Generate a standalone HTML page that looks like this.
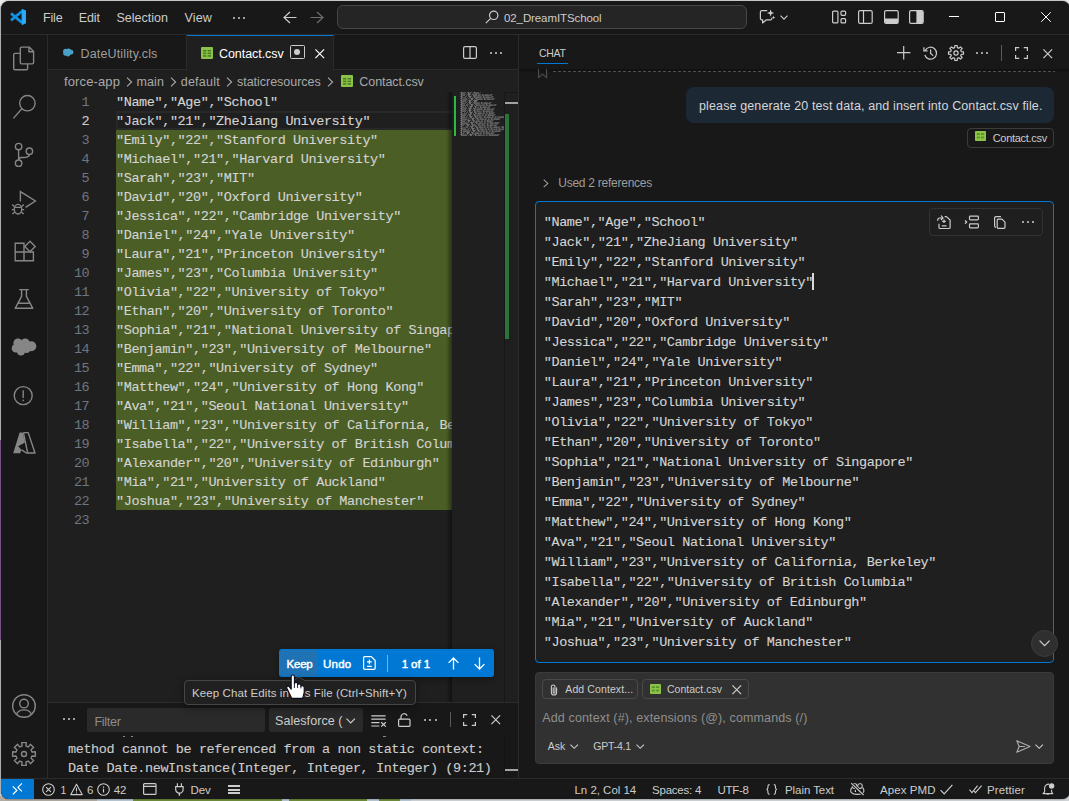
<!DOCTYPE html>
<html><head><meta charset="utf-8"><title>VS Code</title><style>
html,body{margin:0;padding:0;}
body{width:1069px;height:801px;overflow:hidden;background:#ebebeb;position:relative;font-family:"Liberation Sans",sans-serif;}
#win{position:absolute;left:1px;top:1px;width:1068.5px;height:797.5px;border-radius:8px;background:#181818;overflow:hidden;box-shadow:0 0 1.5px rgba(0,0,0,.8);}
#in{position:absolute;left:-1px;top:-1px;width:1069px;height:801px;}
#in div,#in svg,#in span{position:absolute;box-sizing:border-box;}
#in svg{overflow:visible;}
.t{font-family:"Liberation Sans",sans-serif;white-space:pre;}
.m{font-family:"Liberation Mono",monospace;white-space:pre;-webkit-text-stroke:0.12px currentColor;}
</style></head><body>
<div style="position:absolute;left:0px;top:796px;width:97px;height:5px;background:#b0aca3"></div><div style="position:absolute;left:97px;top:796px;width:36px;height:5px;background:#b9c7d3"></div><div style="position:absolute;left:133px;top:796px;width:149px;height:5px;background:#6f8c3c"></div><div style="position:absolute;left:282px;top:796px;width:7px;height:5px;background:#b9c7d3"></div><div style="position:absolute;left:289px;top:796px;width:78px;height:5px;background:#6f8c3c"></div><div style="position:absolute;left:367px;top:796px;width:12px;height:5px;background:#b9c7d3"></div><div style="position:absolute;left:379px;top:796px;width:21px;height:5px;background:#6f8c3c"></div><div style="position:absolute;left:400px;top:796px;width:11px;height:5px;background:#b9c7d3"></div><div style="position:absolute;left:411px;top:796px;width:658px;height:5px;background:#cfd3d6"></div><div style="position:absolute;left:0;top:6px;width:3px;height:790px;background:#c9cfd5"></div><div style="position:absolute;left:0;top:440px;width:3px;height:200px;background:#8d5f9f"></div>
<div id="win"><div id="in">
<div style="left:48px;top:35px;width:470px;height:668px;background:#1f1f1f;"></div>
<div style="left:0px;top:34px;width:1069px;height:1px;background:#2b2b2b;"></div>
<div style="left:47px;top:35px;width:1px;height:743px;background:#2b2b2b;"></div>
<div style="left:48px;top:35px;width:470px;height:35px;background:#181818;"></div>
<div style="left:48px;top:69px;width:470px;height:1px;background:#2b2b2b;"></div>
<div style="left:186px;top:35px;width:1px;height:35px;background:#2b2b2b;"></div>
<div style="left:187px;top:35px;width:146px;height:35px;background:#1f1f1f;"></div>
<div style="left:187px;top:35px;width:146px;height:1px;background:#0078d4;"></div>
<div style="left:333px;top:35px;width:1px;height:35px;background:#2b2b2b;"></div>
<div style="left:518px;top:35px;width:1px;height:743px;background:#2b2b2b;"></div>
<div style="left:0px;top:778px;width:1069px;height:1px;background:#2b2b2b;"></div>
<div style="left:0px;top:779px;width:34px;height:20px;background:#0078d4;"></div>
<div style="left:48px;top:702px;width:470px;height:76px;background:#181818;"></div>
<div style="left:48px;top:702px;width:470px;height:1px;background:#2b2b2b;"></div>
<svg style="left:10px;top:9px;" width="16" height="16" viewBox="0 0 16 16">
<path d="M12 2.2 L1 11.4 M12 13.6 L1 4.4" stroke="#1191e0" stroke-width="2.7" stroke-linecap="butt" fill="none"/>
<path d="M11.6 0.3 L12.4 -0.1 L16 1.6 V14.2 L12.4 15.9 L11.6 15.5 Z" fill="#2aa9f4"/>
</svg>
<span class="t" style="left:43px;top:8.3px;line-height:20px;font-size:12.5px;color:#cccccc;letter-spacing:-0.162px;">File</span>
<span class="t" style="left:78.7px;top:8.3px;line-height:20px;font-size:12.5px;color:#cccccc;letter-spacing:-0.061px;">Edit</span>
<span class="t" style="left:116.5px;top:8.3px;line-height:20px;font-size:12.5px;color:#cccccc;letter-spacing:0.008px;">Selection</span>
<span class="t" style="left:184.5px;top:8.3px;line-height:20px;font-size:12.5px;color:#cccccc;letter-spacing:0.155px;">View</span>
<div style="left:233.0px;top:16.5px;width:2px;height:2px;background:#cccccc;border-radius:1px;"></div>
<div style="left:238.2px;top:16.5px;width:2px;height:2px;background:#cccccc;border-radius:1px;"></div>
<div style="left:243.4px;top:16.5px;width:2px;height:2px;background:#cccccc;border-radius:1px;"></div>
<svg style="left:283px;top:11px;" width="14" height="13" viewBox="0 0 14 13"><path d="M7 1 L1 6.5 L7 12 M1 6.5 H13.5" fill="none" stroke="#cccccc" stroke-width="1.2"/></svg>
<svg style="left:310px;top:11px;" width="14" height="13" viewBox="0 0 14 13"><path d="M7 1 L13 6.5 L7 12 M13 6.5 H0.5" fill="none" stroke="#6f6f6f" stroke-width="1.2"/></svg>
<div style="left:337px;top:5px;width:409.5px;height:24px;background:#252525;border:1px solid #464646;border-radius:6px;"></div>
<svg style="left:485px;top:10px;" width="14" height="14" viewBox="0 0 14 14"><circle cx="8.7" cy="5.3" r="4.2" fill="none" stroke="#cccccc" stroke-width="1.2"/><path d="M5.7 8.3 L0.8 13.2" stroke="#cccccc" stroke-width="1.2"/></svg>
<span class="t" style="left:504px;top:8.3px;line-height:20px;font-size:11.5px;color:#cccccc;letter-spacing:-0.099px;">02_DreamITSchool</span>
<svg style="left:759px;top:9px;" width="17" height="16" viewBox="0 0 17 16"><path d="M8.2 1.7 H2.6 A1.2 1.2 0 0 0 1.4 2.9 V9.6 A1.2 1.2 0 0 0 2.6 10.8 H3.6 V14 L7.4 10.8 H11.6 A1.2 1.2 0 0 0 12.8 9.6 V8.8" fill="none" stroke="#cccccc" stroke-width="1.2" stroke-linejoin="round"/>
<path d="M11.6 0.3 L12.5 3.1 L15.3 4 L12.5 4.9 L11.6 7.7 L10.7 4.9 L7.9 4 L10.7 3.1 Z" fill="#cccccc"/><path d="M14.6 6.6 l0.5 1.3 1.3 0.5 -1.3 0.5 -0.5 1.3 -0.5 -1.3 -1.3 -0.5 1.3 -0.5z" fill="#cccccc"/></svg>
<svg style="left:779.5px;top:14.5px;" width="8" height="5" viewBox="0 0 8 5"><path d="M0.5 0.6 L4 4.1 L7.5 0.6" fill="none" stroke="#cccccc" stroke-width="1.1"/></svg>
<svg style="left:832px;top:10px;" width="15" height="14" viewBox="0 0 15 14"><rect x="0.6" y="1.1" width="5.3" height="11.8" rx="1" fill="none" stroke="#cccccc" stroke-width="1.2"/>
<rect x="9" y="1.1" width="4.6" height="4.2" rx="1" fill="none" stroke="#cccccc" stroke-width="1.2"/>
<rect x="9" y="8.7" width="4.6" height="4.2" rx="1" fill="none" stroke="#cccccc" stroke-width="1.2"/></svg>
<svg style="left:857.5px;top:10px;" width="15" height="14" viewBox="0 0 15 14"><rect x="0.6" y="0.6" width="13.6" height="12.8" rx="1.5" fill="none" stroke="#cccccc" stroke-width="1.2"/><path d="M5.5 0.6 V13.4" stroke="#cccccc" stroke-width="1.2"/></svg>
<svg style="left:883.5px;top:10px;" width="15" height="14" viewBox="0 0 15 14"><rect x="0.6" y="0.6" width="13.6" height="12.8" rx="1.5" fill="none" stroke="#cccccc" stroke-width="1.2"/><path d="M1 8.5 H14 V12 A1.4 1.4 0 0 1 12.6 13.4 H2.4 A1.4 1.4 0 0 1 1 12 Z" fill="#cccccc"/></svg>
<svg style="left:909px;top:10px;" width="15" height="14" viewBox="0 0 15 14"><rect x="0.6" y="0.6" width="13.6" height="12.8" rx="1.5" fill="none" stroke="#cccccc" stroke-width="1.2"/><path d="M7.4 1 H12.6 A1.4 1.4 0 0 1 14 2.4 V11.6 A1.4 1.4 0 0 1 12.6 13 H7.4 Z" fill="#cccccc"/></svg>
<div style="left:948.5px;top:16px;width:10.5px;height:1px;background:#ffffff;"></div>
<div style="left:995px;top:12px;width:10px;height:10px;border:1px solid #ffffff;border-radius:1px;"></div>
<svg style="left:1041px;top:12px;" width="10" height="10" viewBox="0 0 10 10"><path d="M0.2 0.2 L9.8 9.8 M9.8 0.2 L0.2 9.8" stroke="#ffffff" stroke-width="1"/></svg>
<svg style="left:0px;top:35px;" width="48" height="48" viewBox="0 0 48 48">
<path d="M20.3 25.2 V13.4 A1.3 1.3 0 0 1 21.6 12.1 H29.2 L33.6 16.5 V27.6 A1.3 1.3 0 0 1 32.3 28.9 H21.6 A1.3 1.3 0 0 1 20.3 27.6 Z" fill="none" stroke="#868686" stroke-width="1.4" stroke-linejoin="round"/>
<path d="M29 12.3 V16.7 H33.4" fill="none" stroke="#868686" stroke-width="1.4"/>
<path d="M20.3 18.4 H15 A1.3 1.3 0 0 0 13.7 19.7 V33.5 A1.3 1.3 0 0 0 15 34.8 H26.3 A1.3 1.3 0 0 0 27.6 33.5 V29" fill="none" stroke="#868686" stroke-width="1.4"/>
</svg>
<svg style="left:0px;top:83px;" width="48" height="48" viewBox="0 0 48 48"><circle cx="27.4" cy="20.2" r="7.7" fill="none" stroke="#868686" stroke-width="1.4"/><path d="M21.8 25.8 L13.4 35.4" fill="none" stroke="#868686" stroke-width="1.4"/></svg>
<svg style="left:0px;top:131px;" width="48" height="48" viewBox="0 0 48 48"><circle cx="18.6" cy="15.6" r="3.2" fill="none" stroke="#868686" stroke-width="1.4"/><circle cx="18.6" cy="32.2" r="3.2" fill="none" stroke="#868686" stroke-width="1.4"/><circle cx="29.4" cy="20.2" r="3.2" fill="none" stroke="#868686" stroke-width="1.4"/>
<path d="M18.6 18.8 V29 M29.4 23.4 C29.4 27 25 26.4 21.5 26.5 C19.5 26.6 18.6 27.5 18.6 29" fill="none" stroke="#868686" stroke-width="1.4"/></svg>
<svg style="left:0px;top:179px;" width="48" height="48" viewBox="0 0 48 48"><path d="M20.4 22.5 V12.6 L35.4 22 L25.6 28.4" fill="none" stroke="#868686" stroke-width="1.4"/>
<ellipse cx="18" cy="30.2" rx="3.7" ry="4.8" fill="none" stroke="#868686" stroke-width="1.4"/>
<path d="M14.4 28.4 H21.6 M14.3 27.5 L12.2 25.6 M21.7 27.5 L23.8 25.6 M14.2 30.6 H11.8 M21.8 30.6 H24.2 M14.6 33 L12.4 35 M21.4 33 L23.6 35" fill="none" stroke="#868686" stroke-width="1.4" stroke-width="1.2"/></svg>
<svg style="left:0px;top:227px;" width="48" height="48" viewBox="0 0 48 48"><path d="M24 16.3 H15.2 V33.7 H33.4 V25 H24 Z M15.2 25 H24 V33.7" fill="none" stroke="#868686" stroke-width="1.4"/>
<path d="M30 14.3 L35.2 19.5 L30 24.7 L24.8 19.5 Z" fill="none" stroke="#868686" stroke-width="1.4"/></svg>
<svg style="left:0px;top:275px;" width="48" height="48" viewBox="0 0 48 48"><path d="M19.2 14.6 H28.8 M21.6 14.6 V21.4 L15.2 33.3 H32.8 L26.4 21.4 V14.6 M17.8 28.2 H30.2" fill="none" stroke="#868686" stroke-width="1.4" stroke-linejoin="round"/></svg>
<svg style="left:0px;top:323px;" width="48" height="48" viewBox="0 0 48 48"><g fill="#868686"><circle cx="18" cy="20" r="4.6"/><circle cx="25.2" cy="20.4" r="4.8"/><circle cx="31.3" cy="23.2" r="5"/><circle cx="16" cy="25.2" r="4.3"/><circle cx="21" cy="28.2" r="4.2"/><circle cx="26.5" cy="25.8" r="4.3"/><rect x="16" y="20" width="14" height="8"/></g></svg>
<svg style="left:0px;top:371px;" width="48" height="48" viewBox="0 0 48 48"><circle cx="23.2" cy="24.6" r="9" fill="none" stroke="#868686" stroke-width="1.4" stroke-width="1.2"/><path d="M23.2 19.2 V27" fill="none" stroke="#868686" stroke-width="1.4" stroke-width="1.3"/><rect x="22.5" y="28.6" width="1.4" height="1.6" fill="#868686"/></svg>
<svg style="left:0px;top:419px;" width="48" height="48" viewBox="0 0 48 48"><path d="M19.6 13.4 H22.6 L25 23.4 L18.2 27.2 L21.4 30.8 L20.2 34.2 H13.2 Z" fill="#868686"/>
<path d="M23.4 13.6 H28.2 L35 34 H26.4 L21.6 30.8" fill="none" stroke="#868686" stroke-width="1.4" stroke-width="1.3" stroke-linejoin="round"/><path d="M23.4 13.6 L27.6 33.6" fill="none" stroke="#868686" stroke-width="1.4" stroke-width="1.3"/></svg>
<svg style="left:0px;top:682px;" width="48" height="48" viewBox="0 0 48 48"><circle cx="24" cy="24" r="11.3" fill="none" stroke="#868686" stroke-width="1.4"/><circle cx="24" cy="21.6" r="4.3" fill="none" stroke="#868686" stroke-width="1.4"/><path d="M16.6 32.4 C17.6 29.4 20.4 27.9 24 27.9 C27.6 27.9 30.4 29.4 31.4 32.4" fill="none" stroke="#868686" stroke-width="1.4"/></svg>
<svg style="left:0px;top:730px;" width="48" height="48" viewBox="0 0 48 48"><path d="M22.02 16.04 L21.74 12.62 L26.26 12.62 L25.98 16.04 L28.23 16.97 L30.44 14.35 L33.65 17.56 L31.03 19.77 L31.96 22.02 L35.38 21.74 L35.38 26.26 L31.96 25.98 L31.03 28.23 L33.65 30.44 L30.44 33.65 L28.23 31.03 L25.98 31.96 L26.26 35.38 L21.74 35.38 L22.02 31.96 L19.77 31.03 L17.56 33.65 L14.35 30.44 L16.97 28.23 L16.04 25.98 L12.62 26.26 L12.62 21.74 L16.04 22.02 L16.97 19.77 L14.35 17.56 L17.56 14.35 L19.77 16.97 Z" fill="none" stroke="#868686" stroke-width="1.4" stroke-linejoin="round"/><circle cx="24" cy="24" r="2.5" fill="none" stroke="#868686" stroke-width="1.4"/></svg>
<svg style="left:62px;top:47px;" width="12" height="11" viewBox="0 0 12 11"><g fill="#4ba0c8"><circle cx="3.6" cy="4.2" r="2.5"/><circle cx="6.6" cy="4" r="2.6"/><circle cx="9" cy="5.2" r="2.4"/><circle cx="3.4" cy="6.6" r="2.2"/><circle cx="6" cy="7.2" r="2.2"/><rect x="3" y="3.5" width="6" height="4"/></g></svg>
<span class="t" style="left:80.5px;top:43.8px;line-height:20px;font-size:12.5px;color:#9d9d9d;letter-spacing:0.147px;">DateUtility.cls</span>
<svg style="left:201px;top:46.5px;" width="12" height="12" viewBox="0 0 12 12"><rect x="0" y="0" width="12" height="12" rx="1" fill="#8bc34a"/><g fill="#4d7a1e"><rect x="2" y="3" width="3.4" height="1.5"/><rect x="6.6" y="3" width="3.4" height="1.5"/><rect x="2" y="5.6" width="3.4" height="1.5"/><rect x="6.6" y="5.6" width="3.4" height="1.5"/><rect x="2" y="8.2" width="3.4" height="1.5"/><rect x="6.6" y="8.2" width="3.4" height="1.5"/></g></svg>
<span class="t" style="left:219px;top:43.8px;line-height:20px;font-size:12.5px;color:#ffffff;letter-spacing:-0.055px;">Contact.csv</span>
<div style="left:289.6px;top:45px;width:15px;height:14px;border:1.4px solid #cccccc;border-radius:1.5px;"></div>
<div style="left:293.7px;top:48.8px;width:6.6px;height:6.6px;background:#cccccc;border-radius:3.3px;"></div>
<svg style="left:314.5px;top:48.5px;" width="9.5" height="9.5" viewBox="0 0 9.5 9.5"><path d="M0.4 0.4 L9.1 9.1 M9.1 0.4 L0.4 9.1" stroke="#ffffff" stroke-width="1.2"/></svg>
<svg style="left:463px;top:46px;" width="14" height="13" viewBox="0 0 14 13"><rect x="0.6" y="0.6" width="12.8" height="11.8" rx="1.5" fill="none" stroke="#cccccc" stroke-width="1.2"/><path d="M7 0.6 V12.4" stroke="#cccccc" stroke-width="1.2"/></svg>
<div style="left:490px;top:52px;width:2px;height:2px;background:#cccccc;border-radius:1px;"></div>
<div style="left:495px;top:52px;width:2px;height:2px;background:#cccccc;border-radius:1px;"></div>
<div style="left:500px;top:52px;width:2px;height:2px;background:#cccccc;border-radius:1px;"></div>
<span class="t" style="left:64px;top:71.8px;line-height:20px;font-size:13px;color:#a9a9a9;letter-spacing:0.120px;">force-app</span>
<span class="t" style="left:136.5px;top:71.8px;line-height:20px;font-size:12.5px;color:#a9a9a9;letter-spacing:0.099px;">main</span>
<span class="t" style="left:180.7px;top:71.8px;line-height:20px;font-size:12.5px;color:#a9a9a9;letter-spacing:0.251px;">default</span>
<span class="t" style="left:237px;top:71.8px;line-height:20px;font-size:12.5px;color:#a9a9a9;letter-spacing:-0.024px;">staticresources</span>
<svg style="left:125.5px;top:76.5px;" width="7" height="10" viewBox="0 0 7 10"><path d="M1 0.7 L5.6 5 L1 9.3" fill="none" stroke="#a9a9a9" stroke-width="1.1"/></svg>
<svg style="left:170px;top:76.5px;" width="7" height="10" viewBox="0 0 7 10"><path d="M1 0.7 L5.6 5 L1 9.3" fill="none" stroke="#a9a9a9" stroke-width="1.1"/></svg>
<svg style="left:226px;top:76.5px;" width="7" height="10" viewBox="0 0 7 10"><path d="M1 0.7 L5.6 5 L1 9.3" fill="none" stroke="#a9a9a9" stroke-width="1.1"/></svg>
<svg style="left:326.5px;top:76.5px;" width="7" height="10" viewBox="0 0 7 10"><path d="M1 0.7 L5.6 5 L1 9.3" fill="none" stroke="#a9a9a9" stroke-width="1.1"/></svg>
<svg style="left:340.8px;top:75px;" width="12" height="12" viewBox="0 0 12 12"><rect x="0" y="0" width="12" height="12" rx="1" fill="#8bc34a"/><g fill="#4d7a1e"><rect x="2" y="3" width="3.4" height="1.5"/><rect x="6.6" y="3" width="3.4" height="1.5"/><rect x="2" y="5.6" width="3.4" height="1.5"/><rect x="6.6" y="5.6" width="3.4" height="1.5"/><rect x="2" y="8.2" width="3.4" height="1.5"/><rect x="6.6" y="8.2" width="3.4" height="1.5"/></g></svg>
<span class="t" style="left:359.3px;top:71.8px;line-height:20px;font-size:12.5px;color:#a9a9a9;letter-spacing:-0.074px;">Contact.csv</span>
<div style="left:116px;top:130px;width:336px;height:380px;background:#4b5e25;"></div>
<div style="left:116px;top:111px;width:336px;height:19px;border:2px solid #282828;border-right:none;"></div>
<span class="m" style="left:81.6px;top:92.8px;line-height:19px;font-size:13.5px;color:#6e7681;letter-spacing:-0.409px;-webkit-text-stroke:0;">1</span>
<span class="m" style="left:116px;top:92.8px;line-height:19px;font-size:13.5px;color:#d4d4d4;letter-spacing:-0.402px;">&quot;Name&quot;,&quot;Age&quot;,&quot;School&quot;</span>
<span class="m" style="left:81.6px;top:111.8px;line-height:19px;font-size:13.5px;color:#cccccc;letter-spacing:-0.409px;">2</span>
<span class="m" style="left:116px;top:111.8px;line-height:19px;font-size:13.5px;color:#d4d4d4;letter-spacing:-0.401px;">&quot;Jack&quot;,&quot;21&quot;,&quot;ZheJiang University&quot;</span>
<span class="m" style="left:81.6px;top:130.8px;line-height:19px;font-size:13.5px;color:#6e7681;letter-spacing:-0.409px;-webkit-text-stroke:0;">3</span>
<span class="m" style="left:116px;top:130.8px;line-height:19px;font-size:13.5px;color:#d4d4d4;letter-spacing:-0.402px;">&quot;Emily&quot;,&quot;22&quot;,&quot;Stanford University&quot;</span>
<span class="m" style="left:81.6px;top:149.8px;line-height:19px;font-size:13.5px;color:#6e7681;letter-spacing:-0.409px;-webkit-text-stroke:0;">4</span>
<span class="m" style="left:116px;top:149.8px;line-height:19px;font-size:13.5px;color:#d4d4d4;letter-spacing:-0.401px;">&quot;Michael&quot;,&quot;21&quot;,&quot;Harvard University&quot;</span>
<span class="m" style="left:81.6px;top:168.8px;line-height:19px;font-size:13.5px;color:#6e7681;letter-spacing:-0.409px;-webkit-text-stroke:0;">5</span>
<span class="m" style="left:116px;top:168.8px;line-height:19px;font-size:13.5px;color:#d4d4d4;letter-spacing:-0.402px;">&quot;Sarah&quot;,&quot;23&quot;,&quot;MIT&quot;</span>
<span class="m" style="left:81.6px;top:187.8px;line-height:19px;font-size:13.5px;color:#6e7681;letter-spacing:-0.409px;-webkit-text-stroke:0;">6</span>
<span class="m" style="left:116px;top:187.8px;line-height:19px;font-size:13.5px;color:#d4d4d4;letter-spacing:-0.402px;">&quot;David&quot;,&quot;20&quot;,&quot;Oxford University&quot;</span>
<span class="m" style="left:81.6px;top:206.8px;line-height:19px;font-size:13.5px;color:#6e7681;letter-spacing:-0.409px;-webkit-text-stroke:0;">7</span>
<span class="m" style="left:116px;top:206.8px;line-height:19px;font-size:13.5px;color:#d4d4d4;letter-spacing:-0.401px;">&quot;Jessica&quot;,&quot;22&quot;,&quot;Cambridge University&quot;</span>
<span class="m" style="left:81.6px;top:225.8px;line-height:19px;font-size:13.5px;color:#6e7681;letter-spacing:-0.409px;-webkit-text-stroke:0;">8</span>
<span class="m" style="left:116px;top:225.8px;line-height:19px;font-size:13.5px;color:#d4d4d4;letter-spacing:-0.402px;">&quot;Daniel&quot;,&quot;24&quot;,&quot;Yale University&quot;</span>
<span class="m" style="left:81.6px;top:244.8px;line-height:19px;font-size:13.5px;color:#6e7681;letter-spacing:-0.409px;-webkit-text-stroke:0;">9</span>
<span class="m" style="left:116px;top:244.8px;line-height:19px;font-size:13.5px;color:#d4d4d4;letter-spacing:-0.401px;">&quot;Laura&quot;,&quot;21&quot;,&quot;Princeton University&quot;</span>
<span class="m" style="left:73.89999999999999px;top:263.8px;line-height:19px;font-size:13.5px;color:#6e7681;letter-spacing:-0.402px;-webkit-text-stroke:0;">10</span>
<span class="m" style="left:116px;top:263.8px;line-height:19px;font-size:13.5px;color:#d4d4d4;letter-spacing:-0.402px;">&quot;James&quot;,&quot;23&quot;,&quot;Columbia University&quot;</span>
<span class="m" style="left:73.89999999999999px;top:282.8px;line-height:19px;font-size:13.5px;color:#6e7681;letter-spacing:-0.402px;-webkit-text-stroke:0;">11</span>
<span class="m" style="left:116px;top:282.8px;line-height:19px;font-size:13.5px;color:#d4d4d4;letter-spacing:-0.401px;">&quot;Olivia&quot;,&quot;22&quot;,&quot;University of Tokyo&quot;</span>
<span class="m" style="left:73.89999999999999px;top:301.8px;line-height:19px;font-size:13.5px;color:#6e7681;letter-spacing:-0.402px;-webkit-text-stroke:0;">12</span>
<span class="m" style="left:116px;top:301.8px;line-height:19px;font-size:13.5px;color:#d4d4d4;letter-spacing:-0.402px;">&quot;Ethan&quot;,&quot;20&quot;,&quot;University of Toronto&quot;</span>
<span class="m" style="left:73.89999999999999px;top:320.8px;line-height:19px;font-size:13.5px;color:#6e7681;letter-spacing:-0.402px;-webkit-text-stroke:0;">13</span>
<span class="m" style="left:116px;top:320.8px;line-height:19px;font-size:13.5px;color:#d4d4d4;letter-spacing:-0.402px;">&quot;Sophia&quot;,&quot;21&quot;,&quot;National University of Singapore&quot;</span>
<span class="m" style="left:73.89999999999999px;top:339.8px;line-height:19px;font-size:13.5px;color:#6e7681;letter-spacing:-0.402px;-webkit-text-stroke:0;">14</span>
<span class="m" style="left:116px;top:339.8px;line-height:19px;font-size:13.5px;color:#d4d4d4;letter-spacing:-0.401px;">&quot;Benjamin&quot;,&quot;23&quot;,&quot;University of Melbourne&quot;</span>
<span class="m" style="left:73.89999999999999px;top:358.8px;line-height:19px;font-size:13.5px;color:#6e7681;letter-spacing:-0.402px;-webkit-text-stroke:0;">15</span>
<span class="m" style="left:116px;top:358.8px;line-height:19px;font-size:13.5px;color:#d4d4d4;letter-spacing:-0.402px;">&quot;Emma&quot;,&quot;22&quot;,&quot;University of Sydney&quot;</span>
<span class="m" style="left:73.89999999999999px;top:377.8px;line-height:19px;font-size:13.5px;color:#6e7681;letter-spacing:-0.402px;-webkit-text-stroke:0;">16</span>
<span class="m" style="left:116px;top:377.8px;line-height:19px;font-size:13.5px;color:#d4d4d4;letter-spacing:-0.402px;">&quot;Matthew&quot;,&quot;24&quot;,&quot;University of Hong Kong&quot;</span>
<span class="m" style="left:73.89999999999999px;top:396.8px;line-height:19px;font-size:13.5px;color:#6e7681;letter-spacing:-0.402px;-webkit-text-stroke:0;">17</span>
<span class="m" style="left:116px;top:396.8px;line-height:19px;font-size:13.5px;color:#d4d4d4;letter-spacing:-0.402px;">&quot;Ava&quot;,&quot;21&quot;,&quot;Seoul National University&quot;</span>
<span class="m" style="left:73.89999999999999px;top:415.8px;line-height:19px;font-size:13.5px;color:#6e7681;letter-spacing:-0.402px;-webkit-text-stroke:0;">18</span>
<span class="m" style="left:116px;top:415.8px;line-height:19px;font-size:13.5px;color:#d4d4d4;letter-spacing:-0.401px;">&quot;William&quot;,&quot;23&quot;,&quot;University of California, Berkeley&quot;</span>
<span class="m" style="left:73.89999999999999px;top:434.8px;line-height:19px;font-size:13.5px;color:#6e7681;letter-spacing:-0.402px;-webkit-text-stroke:0;">19</span>
<span class="m" style="left:116px;top:434.8px;line-height:19px;font-size:13.5px;color:#d4d4d4;letter-spacing:-0.402px;">&quot;Isabella&quot;,&quot;22&quot;,&quot;University of British Columbia&quot;</span>
<span class="m" style="left:73.89999999999999px;top:453.8px;line-height:19px;font-size:13.5px;color:#6e7681;letter-spacing:-0.402px;-webkit-text-stroke:0;">20</span>
<span class="m" style="left:116px;top:453.8px;line-height:19px;font-size:13.5px;color:#d4d4d4;letter-spacing:-0.402px;">&quot;Alexander&quot;,&quot;20&quot;,&quot;University of Edinburgh&quot;</span>
<span class="m" style="left:73.89999999999999px;top:472.8px;line-height:19px;font-size:13.5px;color:#6e7681;letter-spacing:-0.402px;-webkit-text-stroke:0;">21</span>
<span class="m" style="left:116px;top:472.8px;line-height:19px;font-size:13.5px;color:#d4d4d4;letter-spacing:-0.401px;">&quot;Mia&quot;,&quot;21&quot;,&quot;University of Auckland&quot;</span>
<span class="m" style="left:73.89999999999999px;top:491.8px;line-height:19px;font-size:13.5px;color:#6e7681;letter-spacing:-0.402px;-webkit-text-stroke:0;">22</span>
<span class="m" style="left:116px;top:491.8px;line-height:19px;font-size:13.5px;color:#d4d4d4;letter-spacing:-0.402px;">&quot;Joshua&quot;,&quot;23&quot;,&quot;University of Manchester&quot;</span>
<span class="m" style="left:73.89999999999999px;top:510.8px;line-height:19px;font-size:13.5px;color:#6e7681;letter-spacing:-0.402px;-webkit-text-stroke:0;">23</span>
<div style="left:446px;top:92px;width:6px;height:610px;background:linear-gradient(to right, rgba(0,0,0,0), rgba(0,0,0,.45));"></div>
<div style="left:452px;top:92px;width:66px;height:610px;background:#1f1f1f;"></div>
<div style="left:454px;top:96px;width:2px;height:40px;background:#2db843;"></div>
<svg style="left:0;top:0" width="520" height="140"><g fill="#dddddd"><rect x="460.0" y="92.0" width="1.0" height="0.9" opacity="0.3"/><rect x="461.0" y="92.1" width="1.0" height="1.7" opacity="0.5"/><rect x="462.0" y="92.4" width="3.0" height="1.4" opacity="0.42"/><rect x="464.9" y="92.0" width="1.0" height="0.9" opacity="0.3"/><rect x="465.9" y="92.9" width="1.0" height="0.9" opacity="0.28"/><rect x="466.9" y="92.0" width="1.0" height="0.9" opacity="0.3"/><rect x="467.9" y="92.1" width="1.0" height="1.7" opacity="0.5"/><rect x="468.9" y="92.4" width="2.0" height="1.4" opacity="0.42"/><rect x="470.9" y="92.0" width="1.0" height="0.9" opacity="0.3"/><rect x="471.9" y="92.9" width="1.0" height="0.9" opacity="0.28"/><rect x="472.9" y="92.0" width="1.0" height="0.9" opacity="0.3"/><rect x="473.9" y="92.1" width="1.0" height="1.7" opacity="0.5"/><rect x="474.9" y="92.4" width="4.0" height="1.4" opacity="0.42"/><rect x="478.8" y="92.9" width="1.0" height="0.9" opacity="0.28"/><rect x="479.8" y="92.0" width="1.0" height="0.9" opacity="0.3"/><rect x="460.0" y="94.0" width="1.0" height="0.9" opacity="0.3"/><rect x="461.0" y="94.1" width="1.0" height="1.7" opacity="0.5"/><rect x="462.0" y="94.4" width="3.0" height="1.4" opacity="0.42"/><rect x="464.9" y="94.0" width="1.0" height="0.9" opacity="0.3"/><rect x="465.9" y="94.9" width="1.0" height="0.9" opacity="0.28"/><rect x="466.9" y="94.0" width="1.0" height="0.9" opacity="0.3"/><rect x="467.9" y="94.1" width="2.0" height="1.7" opacity="0.5"/><rect x="469.9" y="94.0" width="1.0" height="0.9" opacity="0.3"/><rect x="470.9" y="94.9" width="1.0" height="0.9" opacity="0.28"/><rect x="471.9" y="94.0" width="1.0" height="0.9" opacity="0.3"/><rect x="472.9" y="94.1" width="1.0" height="1.7" opacity="0.5"/><rect x="473.9" y="94.4" width="2.0" height="1.4" opacity="0.42"/><rect x="475.8" y="94.1" width="1.0" height="1.7" opacity="0.5"/><rect x="476.8" y="94.9" width="1.0" height="0.9" opacity="0.28"/><rect x="477.8" y="94.4" width="3.0" height="1.4" opacity="0.42"/><rect x="481.8" y="94.1" width="1.0" height="1.7" opacity="0.5"/><rect x="482.8" y="94.4" width="1.0" height="1.4" opacity="0.42"/><rect x="483.8" y="94.9" width="1.0" height="0.9" opacity="0.28"/><rect x="484.8" y="94.4" width="4.0" height="1.4" opacity="0.42"/><rect x="488.7" y="94.9" width="1.0" height="0.9" opacity="0.28"/><rect x="489.7" y="94.4" width="2.0" height="1.4" opacity="0.42"/><rect x="491.7" y="94.0" width="1.0" height="0.9" opacity="0.3"/><rect x="460.0" y="96.0" width="1.0" height="0.9" opacity="0.3"/><rect x="461.0" y="96.1" width="1.0" height="1.7" opacity="0.5"/><rect x="462.0" y="96.4" width="1.0" height="1.4" opacity="0.42"/><rect x="463.0" y="96.9" width="2.0" height="0.9" opacity="0.28"/><rect x="464.9" y="96.4" width="1.0" height="1.4" opacity="0.42"/><rect x="465.9" y="96.0" width="1.0" height="0.9" opacity="0.3"/><rect x="466.9" y="96.9" width="1.0" height="0.9" opacity="0.28"/><rect x="467.9" y="96.0" width="1.0" height="0.9" opacity="0.3"/><rect x="468.9" y="96.1" width="2.0" height="1.7" opacity="0.5"/><rect x="470.9" y="96.0" width="1.0" height="0.9" opacity="0.3"/><rect x="471.9" y="96.9" width="1.0" height="0.9" opacity="0.28"/><rect x="472.9" y="96.0" width="1.0" height="0.9" opacity="0.3"/><rect x="473.9" y="96.1" width="1.0" height="1.7" opacity="0.5"/><rect x="474.9" y="96.4" width="6.9" height="1.4" opacity="0.42"/><rect x="482.8" y="96.1" width="1.0" height="1.7" opacity="0.5"/><rect x="483.8" y="96.4" width="1.0" height="1.4" opacity="0.42"/><rect x="484.8" y="96.9" width="1.0" height="0.9" opacity="0.28"/><rect x="485.7" y="96.4" width="4.0" height="1.4" opacity="0.42"/><rect x="489.7" y="96.9" width="1.0" height="0.9" opacity="0.28"/><rect x="490.7" y="96.4" width="2.0" height="1.4" opacity="0.42"/><rect x="492.7" y="96.0" width="1.0" height="0.9" opacity="0.3"/><rect x="460.0" y="98.0" width="1.0" height="0.9" opacity="0.3"/><rect x="461.0" y="98.1" width="1.0" height="1.7" opacity="0.5"/><rect x="462.0" y="98.9" width="1.0" height="0.9" opacity="0.28"/><rect x="463.0" y="98.4" width="4.0" height="1.4" opacity="0.42"/><rect x="466.9" y="98.9" width="1.0" height="0.9" opacity="0.28"/><rect x="467.9" y="98.0" width="1.0" height="0.9" opacity="0.3"/><rect x="468.9" y="98.9" width="1.0" height="0.9" opacity="0.28"/><rect x="469.9" y="98.0" width="1.0" height="0.9" opacity="0.3"/><rect x="470.9" y="98.1" width="2.0" height="1.7" opacity="0.5"/><rect x="472.9" y="98.0" width="1.0" height="0.9" opacity="0.3"/><rect x="473.9" y="98.9" width="1.0" height="0.9" opacity="0.28"/><rect x="474.9" y="98.0" width="1.0" height="0.9" opacity="0.3"/><rect x="475.8" y="98.1" width="1.0" height="1.7" opacity="0.5"/><rect x="476.8" y="98.4" width="5.9" height="1.4" opacity="0.42"/><rect x="483.8" y="98.1" width="1.0" height="1.7" opacity="0.5"/><rect x="484.8" y="98.4" width="1.0" height="1.4" opacity="0.42"/><rect x="485.7" y="98.9" width="1.0" height="0.9" opacity="0.28"/><rect x="486.7" y="98.4" width="4.0" height="1.4" opacity="0.42"/><rect x="490.7" y="98.9" width="1.0" height="0.9" opacity="0.28"/><rect x="491.7" y="98.4" width="2.0" height="1.4" opacity="0.42"/><rect x="493.7" y="98.0" width="1.0" height="0.9" opacity="0.3"/><rect x="460.0" y="100.0" width="1.0" height="0.9" opacity="0.3"/><rect x="461.0" y="100.1" width="1.0" height="1.7" opacity="0.5"/><rect x="462.0" y="100.4" width="4.0" height="1.4" opacity="0.42"/><rect x="465.9" y="100.0" width="1.0" height="0.9" opacity="0.3"/><rect x="466.9" y="100.9" width="1.0" height="0.9" opacity="0.28"/><rect x="467.9" y="100.0" width="1.0" height="0.9" opacity="0.3"/><rect x="468.9" y="100.1" width="2.0" height="1.7" opacity="0.5"/><rect x="470.9" y="100.0" width="1.0" height="0.9" opacity="0.3"/><rect x="471.9" y="100.9" width="1.0" height="0.9" opacity="0.28"/><rect x="472.9" y="100.0" width="1.0" height="0.9" opacity="0.3"/><rect x="473.9" y="100.1" width="3.0" height="1.7" opacity="0.5"/><rect x="476.8" y="100.0" width="1.0" height="0.9" opacity="0.3"/><rect x="460.0" y="102.0" width="1.0" height="0.9" opacity="0.3"/><rect x="461.0" y="102.1" width="1.0" height="1.7" opacity="0.5"/><rect x="462.0" y="102.4" width="2.0" height="1.4" opacity="0.42"/><rect x="464.0" y="102.9" width="1.0" height="0.9" opacity="0.28"/><rect x="464.9" y="102.4" width="1.0" height="1.4" opacity="0.42"/><rect x="465.9" y="102.0" width="1.0" height="0.9" opacity="0.3"/><rect x="466.9" y="102.9" width="1.0" height="0.9" opacity="0.28"/><rect x="467.9" y="102.0" width="1.0" height="0.9" opacity="0.3"/><rect x="468.9" y="102.1" width="2.0" height="1.7" opacity="0.5"/><rect x="470.9" y="102.0" width="1.0" height="0.9" opacity="0.3"/><rect x="471.9" y="102.9" width="1.0" height="0.9" opacity="0.28"/><rect x="472.9" y="102.0" width="1.0" height="0.9" opacity="0.3"/><rect x="473.9" y="102.1" width="1.0" height="1.7" opacity="0.5"/><rect x="474.9" y="102.4" width="4.9" height="1.4" opacity="0.42"/><rect x="480.8" y="102.1" width="1.0" height="1.7" opacity="0.5"/><rect x="481.8" y="102.4" width="1.0" height="1.4" opacity="0.42"/><rect x="482.8" y="102.9" width="1.0" height="0.9" opacity="0.28"/><rect x="483.8" y="102.4" width="4.0" height="1.4" opacity="0.42"/><rect x="487.7" y="102.9" width="1.0" height="0.9" opacity="0.28"/><rect x="488.7" y="102.4" width="2.0" height="1.4" opacity="0.42"/><rect x="490.7" y="102.0" width="1.0" height="0.9" opacity="0.3"/><rect x="460.0" y="104.0" width="1.0" height="0.9" opacity="0.3"/><rect x="461.0" y="104.1" width="1.0" height="1.7" opacity="0.5"/><rect x="462.0" y="104.4" width="3.0" height="1.4" opacity="0.42"/><rect x="464.9" y="104.9" width="1.0" height="0.9" opacity="0.28"/><rect x="465.9" y="104.4" width="2.0" height="1.4" opacity="0.42"/><rect x="467.9" y="104.0" width="1.0" height="0.9" opacity="0.3"/><rect x="468.9" y="104.9" width="1.0" height="0.9" opacity="0.28"/><rect x="469.9" y="104.0" width="1.0" height="0.9" opacity="0.3"/><rect x="470.9" y="104.1" width="2.0" height="1.7" opacity="0.5"/><rect x="472.9" y="104.0" width="1.0" height="0.9" opacity="0.3"/><rect x="473.9" y="104.9" width="1.0" height="0.9" opacity="0.28"/><rect x="474.9" y="104.0" width="1.0" height="0.9" opacity="0.3"/><rect x="475.8" y="104.1" width="1.0" height="1.7" opacity="0.5"/><rect x="476.8" y="104.4" width="4.0" height="1.4" opacity="0.42"/><rect x="480.8" y="104.9" width="1.0" height="0.9" opacity="0.28"/><rect x="481.8" y="104.4" width="3.0" height="1.4" opacity="0.42"/><rect x="485.7" y="104.1" width="1.0" height="1.7" opacity="0.5"/><rect x="486.7" y="104.4" width="1.0" height="1.4" opacity="0.42"/><rect x="487.7" y="104.9" width="1.0" height="0.9" opacity="0.28"/><rect x="488.7" y="104.4" width="4.0" height="1.4" opacity="0.42"/><rect x="492.7" y="104.9" width="1.0" height="0.9" opacity="0.28"/><rect x="493.7" y="104.4" width="2.0" height="1.4" opacity="0.42"/><rect x="495.6" y="104.0" width="1.0" height="0.9" opacity="0.3"/><rect x="460.0" y="106.0" width="1.0" height="0.9" opacity="0.3"/><rect x="461.0" y="106.1" width="1.0" height="1.7" opacity="0.5"/><rect x="462.0" y="106.4" width="2.0" height="1.4" opacity="0.42"/><rect x="464.0" y="106.9" width="1.0" height="0.9" opacity="0.28"/><rect x="464.9" y="106.4" width="1.0" height="1.4" opacity="0.42"/><rect x="465.9" y="106.9" width="1.0" height="0.9" opacity="0.28"/><rect x="466.9" y="106.0" width="1.0" height="0.9" opacity="0.3"/><rect x="467.9" y="106.9" width="1.0" height="0.9" opacity="0.28"/><rect x="468.9" y="106.0" width="1.0" height="0.9" opacity="0.3"/><rect x="469.9" y="106.1" width="2.0" height="1.7" opacity="0.5"/><rect x="471.9" y="106.0" width="1.0" height="0.9" opacity="0.3"/><rect x="472.9" y="106.9" width="1.0" height="0.9" opacity="0.28"/><rect x="473.9" y="106.0" width="1.0" height="0.9" opacity="0.3"/><rect x="474.9" y="106.1" width="1.0" height="1.7" opacity="0.5"/><rect x="475.8" y="106.4" width="1.0" height="1.4" opacity="0.42"/><rect x="476.8" y="106.9" width="1.0" height="0.9" opacity="0.28"/><rect x="477.8" y="106.4" width="1.0" height="1.4" opacity="0.42"/><rect x="479.8" y="106.1" width="1.0" height="1.7" opacity="0.5"/><rect x="480.8" y="106.4" width="1.0" height="1.4" opacity="0.42"/><rect x="481.8" y="106.9" width="1.0" height="0.9" opacity="0.28"/><rect x="482.8" y="106.4" width="4.0" height="1.4" opacity="0.42"/><rect x="486.7" y="106.9" width="1.0" height="0.9" opacity="0.28"/><rect x="487.7" y="106.4" width="2.0" height="1.4" opacity="0.42"/><rect x="489.7" y="106.0" width="1.0" height="0.9" opacity="0.3"/><rect x="460.0" y="108.0" width="1.0" height="0.9" opacity="0.3"/><rect x="461.0" y="108.1" width="1.0" height="1.7" opacity="0.5"/><rect x="462.0" y="108.4" width="4.0" height="1.4" opacity="0.42"/><rect x="465.9" y="108.0" width="1.0" height="0.9" opacity="0.3"/><rect x="466.9" y="108.9" width="1.0" height="0.9" opacity="0.28"/><rect x="467.9" y="108.0" width="1.0" height="0.9" opacity="0.3"/><rect x="468.9" y="108.1" width="2.0" height="1.7" opacity="0.5"/><rect x="470.9" y="108.0" width="1.0" height="0.9" opacity="0.3"/><rect x="471.9" y="108.9" width="1.0" height="0.9" opacity="0.28"/><rect x="472.9" y="108.0" width="1.0" height="0.9" opacity="0.3"/><rect x="473.9" y="108.1" width="1.0" height="1.7" opacity="0.5"/><rect x="474.9" y="108.4" width="1.0" height="1.4" opacity="0.42"/><rect x="475.8" y="108.9" width="1.0" height="0.9" opacity="0.28"/><rect x="476.8" y="108.4" width="5.9" height="1.4" opacity="0.42"/><rect x="483.8" y="108.1" width="1.0" height="1.7" opacity="0.5"/><rect x="484.8" y="108.4" width="1.0" height="1.4" opacity="0.42"/><rect x="485.7" y="108.9" width="1.0" height="0.9" opacity="0.28"/><rect x="486.7" y="108.4" width="4.0" height="1.4" opacity="0.42"/><rect x="490.7" y="108.9" width="1.0" height="0.9" opacity="0.28"/><rect x="491.7" y="108.4" width="2.0" height="1.4" opacity="0.42"/><rect x="493.7" y="108.0" width="1.0" height="0.9" opacity="0.3"/><rect x="460.0" y="110.0" width="1.0" height="0.9" opacity="0.3"/><rect x="461.0" y="110.1" width="1.0" height="1.7" opacity="0.5"/><rect x="462.0" y="110.4" width="4.0" height="1.4" opacity="0.42"/><rect x="465.9" y="110.0" width="1.0" height="0.9" opacity="0.3"/><rect x="466.9" y="110.9" width="1.0" height="0.9" opacity="0.28"/><rect x="467.9" y="110.0" width="1.0" height="0.9" opacity="0.3"/><rect x="468.9" y="110.1" width="2.0" height="1.7" opacity="0.5"/><rect x="470.9" y="110.0" width="1.0" height="0.9" opacity="0.3"/><rect x="471.9" y="110.9" width="1.0" height="0.9" opacity="0.28"/><rect x="472.9" y="110.0" width="1.0" height="0.9" opacity="0.3"/><rect x="473.9" y="110.1" width="1.0" height="1.7" opacity="0.5"/><rect x="474.9" y="110.4" width="1.0" height="1.4" opacity="0.42"/><rect x="475.8" y="110.9" width="1.0" height="0.9" opacity="0.28"/><rect x="476.8" y="110.4" width="3.0" height="1.4" opacity="0.42"/><rect x="479.8" y="110.9" width="1.0" height="0.9" opacity="0.28"/><rect x="480.8" y="110.4" width="1.0" height="1.4" opacity="0.42"/><rect x="482.8" y="110.1" width="1.0" height="1.7" opacity="0.5"/><rect x="483.8" y="110.4" width="1.0" height="1.4" opacity="0.42"/><rect x="484.8" y="110.9" width="1.0" height="0.9" opacity="0.28"/><rect x="485.7" y="110.4" width="4.0" height="1.4" opacity="0.42"/><rect x="489.7" y="110.9" width="1.0" height="0.9" opacity="0.28"/><rect x="490.7" y="110.4" width="2.0" height="1.4" opacity="0.42"/><rect x="492.7" y="110.0" width="1.0" height="0.9" opacity="0.3"/><rect x="460.0" y="112.0" width="1.0" height="0.9" opacity="0.3"/><rect x="461.0" y="112.1" width="1.0" height="1.7" opacity="0.5"/><rect x="462.0" y="112.9" width="2.0" height="0.9" opacity="0.28"/><rect x="464.0" y="112.4" width="1.0" height="1.4" opacity="0.42"/><rect x="464.9" y="112.9" width="1.0" height="0.9" opacity="0.28"/><rect x="465.9" y="112.4" width="1.0" height="1.4" opacity="0.42"/><rect x="466.9" y="112.0" width="1.0" height="0.9" opacity="0.3"/><rect x="467.9" y="112.9" width="1.0" height="0.9" opacity="0.28"/><rect x="468.9" y="112.0" width="1.0" height="0.9" opacity="0.3"/><rect x="469.9" y="112.1" width="2.0" height="1.7" opacity="0.5"/><rect x="471.9" y="112.0" width="1.0" height="0.9" opacity="0.3"/><rect x="472.9" y="112.9" width="1.0" height="0.9" opacity="0.28"/><rect x="473.9" y="112.0" width="1.0" height="0.9" opacity="0.3"/><rect x="474.9" y="112.1" width="1.0" height="1.7" opacity="0.5"/><rect x="475.8" y="112.4" width="1.0" height="1.4" opacity="0.42"/><rect x="476.8" y="112.9" width="1.0" height="0.9" opacity="0.28"/><rect x="477.8" y="112.4" width="4.0" height="1.4" opacity="0.42"/><rect x="481.8" y="112.9" width="1.0" height="0.9" opacity="0.28"/><rect x="482.8" y="112.4" width="2.0" height="1.4" opacity="0.42"/><rect x="485.7" y="112.4" width="2.0" height="1.4" opacity="0.42"/><rect x="488.7" y="112.1" width="1.0" height="1.7" opacity="0.5"/><rect x="489.7" y="112.4" width="4.0" height="1.4" opacity="0.42"/><rect x="493.7" y="112.0" width="1.0" height="0.9" opacity="0.3"/><rect x="460.0" y="114.0" width="1.0" height="0.9" opacity="0.3"/><rect x="461.0" y="114.1" width="1.0" height="1.7" opacity="0.5"/><rect x="462.0" y="114.4" width="4.0" height="1.4" opacity="0.42"/><rect x="465.9" y="114.0" width="1.0" height="0.9" opacity="0.3"/><rect x="466.9" y="114.9" width="1.0" height="0.9" opacity="0.28"/><rect x="467.9" y="114.0" width="1.0" height="0.9" opacity="0.3"/><rect x="468.9" y="114.1" width="2.0" height="1.7" opacity="0.5"/><rect x="470.9" y="114.0" width="1.0" height="0.9" opacity="0.3"/><rect x="471.9" y="114.9" width="1.0" height="0.9" opacity="0.28"/><rect x="472.9" y="114.0" width="1.0" height="0.9" opacity="0.3"/><rect x="473.9" y="114.1" width="1.0" height="1.7" opacity="0.5"/><rect x="474.9" y="114.4" width="1.0" height="1.4" opacity="0.42"/><rect x="475.8" y="114.9" width="1.0" height="0.9" opacity="0.28"/><rect x="476.8" y="114.4" width="4.0" height="1.4" opacity="0.42"/><rect x="480.8" y="114.9" width="1.0" height="0.9" opacity="0.28"/><rect x="481.8" y="114.4" width="2.0" height="1.4" opacity="0.42"/><rect x="484.8" y="114.4" width="2.0" height="1.4" opacity="0.42"/><rect x="487.7" y="114.1" width="1.0" height="1.7" opacity="0.5"/><rect x="488.7" y="114.4" width="5.9" height="1.4" opacity="0.42"/><rect x="494.6" y="114.0" width="1.0" height="0.9" opacity="0.3"/><rect x="460.0" y="116.0" width="1.0" height="0.9" opacity="0.3"/><rect x="461.0" y="116.1" width="1.0" height="1.7" opacity="0.5"/><rect x="462.0" y="116.4" width="3.0" height="1.4" opacity="0.42"/><rect x="464.9" y="116.9" width="1.0" height="0.9" opacity="0.28"/><rect x="465.9" y="116.4" width="1.0" height="1.4" opacity="0.42"/><rect x="466.9" y="116.0" width="1.0" height="0.9" opacity="0.3"/><rect x="467.9" y="116.9" width="1.0" height="0.9" opacity="0.28"/><rect x="468.9" y="116.0" width="1.0" height="0.9" opacity="0.3"/><rect x="469.9" y="116.1" width="2.0" height="1.7" opacity="0.5"/><rect x="471.9" y="116.0" width="1.0" height="0.9" opacity="0.3"/><rect x="472.9" y="116.9" width="1.0" height="0.9" opacity="0.28"/><rect x="473.9" y="116.0" width="1.0" height="0.9" opacity="0.3"/><rect x="474.9" y="116.1" width="1.0" height="1.7" opacity="0.5"/><rect x="475.8" y="116.4" width="2.0" height="1.4" opacity="0.42"/><rect x="477.8" y="116.9" width="1.0" height="0.9" opacity="0.28"/><rect x="478.8" y="116.4" width="3.0" height="1.4" opacity="0.42"/><rect x="481.8" y="116.9" width="1.0" height="0.9" opacity="0.28"/><rect x="483.8" y="116.1" width="1.0" height="1.7" opacity="0.5"/><rect x="484.8" y="116.4" width="1.0" height="1.4" opacity="0.42"/><rect x="485.7" y="116.9" width="1.0" height="0.9" opacity="0.28"/><rect x="486.7" y="116.4" width="4.0" height="1.4" opacity="0.42"/><rect x="490.7" y="116.9" width="1.0" height="0.9" opacity="0.28"/><rect x="491.7" y="116.4" width="2.0" height="1.4" opacity="0.42"/><rect x="494.6" y="116.4" width="2.0" height="1.4" opacity="0.42"/><rect x="497.6" y="116.1" width="1.0" height="1.7" opacity="0.5"/><rect x="498.6" y="116.9" width="1.0" height="0.9" opacity="0.28"/><rect x="499.6" y="116.4" width="4.4" height="1.4" opacity="0.42"/><rect x="460.0" y="118.0" width="1.0" height="0.9" opacity="0.3"/><rect x="461.0" y="118.1" width="1.0" height="1.7" opacity="0.5"/><rect x="462.0" y="118.4" width="4.9" height="1.4" opacity="0.42"/><rect x="466.9" y="118.9" width="1.0" height="0.9" opacity="0.28"/><rect x="467.9" y="118.4" width="1.0" height="1.4" opacity="0.42"/><rect x="468.9" y="118.0" width="1.0" height="0.9" opacity="0.3"/><rect x="469.9" y="118.9" width="1.0" height="0.9" opacity="0.28"/><rect x="470.9" y="118.0" width="1.0" height="0.9" opacity="0.3"/><rect x="471.9" y="118.1" width="2.0" height="1.7" opacity="0.5"/><rect x="473.9" y="118.0" width="1.0" height="0.9" opacity="0.3"/><rect x="474.9" y="118.9" width="1.0" height="0.9" opacity="0.28"/><rect x="475.8" y="118.0" width="1.0" height="0.9" opacity="0.3"/><rect x="476.8" y="118.1" width="1.0" height="1.7" opacity="0.5"/><rect x="477.8" y="118.4" width="1.0" height="1.4" opacity="0.42"/><rect x="478.8" y="118.9" width="1.0" height="0.9" opacity="0.28"/><rect x="479.8" y="118.4" width="4.0" height="1.4" opacity="0.42"/><rect x="483.8" y="118.9" width="1.0" height="0.9" opacity="0.28"/><rect x="484.8" y="118.4" width="2.0" height="1.4" opacity="0.42"/><rect x="487.7" y="118.4" width="2.0" height="1.4" opacity="0.42"/><rect x="490.7" y="118.1" width="1.0" height="1.7" opacity="0.5"/><rect x="491.7" y="118.4" width="1.0" height="1.4" opacity="0.42"/><rect x="492.7" y="118.9" width="1.0" height="0.9" opacity="0.28"/><rect x="493.7" y="118.4" width="5.9" height="1.4" opacity="0.42"/><rect x="499.6" y="118.0" width="1.0" height="0.9" opacity="0.3"/><rect x="460.0" y="120.0" width="1.0" height="0.9" opacity="0.3"/><rect x="461.0" y="120.1" width="1.0" height="1.7" opacity="0.5"/><rect x="462.0" y="120.4" width="3.0" height="1.4" opacity="0.42"/><rect x="464.9" y="120.0" width="1.0" height="0.9" opacity="0.3"/><rect x="465.9" y="120.9" width="1.0" height="0.9" opacity="0.28"/><rect x="466.9" y="120.0" width="1.0" height="0.9" opacity="0.3"/><rect x="467.9" y="120.1" width="2.0" height="1.7" opacity="0.5"/><rect x="469.9" y="120.0" width="1.0" height="0.9" opacity="0.3"/><rect x="470.9" y="120.9" width="1.0" height="0.9" opacity="0.28"/><rect x="471.9" y="120.0" width="1.0" height="0.9" opacity="0.3"/><rect x="472.9" y="120.1" width="1.0" height="1.7" opacity="0.5"/><rect x="473.9" y="120.4" width="1.0" height="1.4" opacity="0.42"/><rect x="474.9" y="120.9" width="1.0" height="0.9" opacity="0.28"/><rect x="475.8" y="120.4" width="4.0" height="1.4" opacity="0.42"/><rect x="479.8" y="120.9" width="1.0" height="0.9" opacity="0.28"/><rect x="480.8" y="120.4" width="2.0" height="1.4" opacity="0.42"/><rect x="483.8" y="120.4" width="2.0" height="1.4" opacity="0.42"/><rect x="486.7" y="120.1" width="1.0" height="1.7" opacity="0.5"/><rect x="487.7" y="120.4" width="4.9" height="1.4" opacity="0.42"/><rect x="492.7" y="120.0" width="1.0" height="0.9" opacity="0.3"/><rect x="460.0" y="122.0" width="1.0" height="0.9" opacity="0.3"/><rect x="461.0" y="122.1" width="1.0" height="1.7" opacity="0.5"/><rect x="462.0" y="122.4" width="5.9" height="1.4" opacity="0.42"/><rect x="467.9" y="122.0" width="1.0" height="0.9" opacity="0.3"/><rect x="468.9" y="122.9" width="1.0" height="0.9" opacity="0.28"/><rect x="469.9" y="122.0" width="1.0" height="0.9" opacity="0.3"/><rect x="470.9" y="122.1" width="2.0" height="1.7" opacity="0.5"/><rect x="472.9" y="122.0" width="1.0" height="0.9" opacity="0.3"/><rect x="473.9" y="122.9" width="1.0" height="0.9" opacity="0.28"/><rect x="474.9" y="122.0" width="1.0" height="0.9" opacity="0.3"/><rect x="475.8" y="122.1" width="1.0" height="1.7" opacity="0.5"/><rect x="476.8" y="122.4" width="1.0" height="1.4" opacity="0.42"/><rect x="477.8" y="122.9" width="1.0" height="0.9" opacity="0.28"/><rect x="478.8" y="122.4" width="4.0" height="1.4" opacity="0.42"/><rect x="482.8" y="122.9" width="1.0" height="0.9" opacity="0.28"/><rect x="483.8" y="122.4" width="2.0" height="1.4" opacity="0.42"/><rect x="486.7" y="122.4" width="2.0" height="1.4" opacity="0.42"/><rect x="489.7" y="122.1" width="1.0" height="1.7" opacity="0.5"/><rect x="490.7" y="122.4" width="3.0" height="1.4" opacity="0.42"/><rect x="494.6" y="122.1" width="1.0" height="1.7" opacity="0.5"/><rect x="495.6" y="122.4" width="3.0" height="1.4" opacity="0.42"/><rect x="498.6" y="122.0" width="1.0" height="0.9" opacity="0.3"/><rect x="460.0" y="124.0" width="1.0" height="0.9" opacity="0.3"/><rect x="461.0" y="124.1" width="1.0" height="1.7" opacity="0.5"/><rect x="462.0" y="124.4" width="2.0" height="1.4" opacity="0.42"/><rect x="464.0" y="124.0" width="1.0" height="0.9" opacity="0.3"/><rect x="464.9" y="124.9" width="1.0" height="0.9" opacity="0.28"/><rect x="465.9" y="124.0" width="1.0" height="0.9" opacity="0.3"/><rect x="466.9" y="124.1" width="2.0" height="1.7" opacity="0.5"/><rect x="468.9" y="124.0" width="1.0" height="0.9" opacity="0.3"/><rect x="469.9" y="124.9" width="1.0" height="0.9" opacity="0.28"/><rect x="470.9" y="124.0" width="1.0" height="0.9" opacity="0.3"/><rect x="471.9" y="124.1" width="1.0" height="1.7" opacity="0.5"/><rect x="472.9" y="124.4" width="3.0" height="1.4" opacity="0.42"/><rect x="475.8" y="124.9" width="1.0" height="0.9" opacity="0.28"/><rect x="477.8" y="124.1" width="1.0" height="1.7" opacity="0.5"/><rect x="478.8" y="124.4" width="2.0" height="1.4" opacity="0.42"/><rect x="480.8" y="124.9" width="1.0" height="0.9" opacity="0.28"/><rect x="481.8" y="124.4" width="3.0" height="1.4" opacity="0.42"/><rect x="484.8" y="124.9" width="1.0" height="0.9" opacity="0.28"/><rect x="486.7" y="124.1" width="1.0" height="1.7" opacity="0.5"/><rect x="487.7" y="124.4" width="1.0" height="1.4" opacity="0.42"/><rect x="488.7" y="124.9" width="1.0" height="0.9" opacity="0.28"/><rect x="489.7" y="124.4" width="4.0" height="1.4" opacity="0.42"/><rect x="493.7" y="124.9" width="1.0" height="0.9" opacity="0.28"/><rect x="494.6" y="124.4" width="2.0" height="1.4" opacity="0.42"/><rect x="496.6" y="124.0" width="1.0" height="0.9" opacity="0.3"/><rect x="460.0" y="126.0" width="1.0" height="0.9" opacity="0.3"/><rect x="461.0" y="126.1" width="1.0" height="1.7" opacity="0.5"/><rect x="462.0" y="126.9" width="4.0" height="0.9" opacity="0.28"/><rect x="465.9" y="126.4" width="2.0" height="1.4" opacity="0.42"/><rect x="467.9" y="126.0" width="1.0" height="0.9" opacity="0.3"/><rect x="468.9" y="126.9" width="1.0" height="0.9" opacity="0.28"/><rect x="469.9" y="126.0" width="1.0" height="0.9" opacity="0.3"/><rect x="470.9" y="126.1" width="2.0" height="1.7" opacity="0.5"/><rect x="472.9" y="126.0" width="1.0" height="0.9" opacity="0.3"/><rect x="473.9" y="126.9" width="1.0" height="0.9" opacity="0.28"/><rect x="474.9" y="126.0" width="1.0" height="0.9" opacity="0.3"/><rect x="475.8" y="126.1" width="1.0" height="1.7" opacity="0.5"/><rect x="476.8" y="126.4" width="1.0" height="1.4" opacity="0.42"/><rect x="477.8" y="126.9" width="1.0" height="0.9" opacity="0.28"/><rect x="478.8" y="126.4" width="4.0" height="1.4" opacity="0.42"/><rect x="482.8" y="126.9" width="1.0" height="0.9" opacity="0.28"/><rect x="483.8" y="126.4" width="2.0" height="1.4" opacity="0.42"/><rect x="486.7" y="126.4" width="2.0" height="1.4" opacity="0.42"/><rect x="489.7" y="126.1" width="1.0" height="1.7" opacity="0.5"/><rect x="490.7" y="126.4" width="1.0" height="1.4" opacity="0.42"/><rect x="491.7" y="126.9" width="2.0" height="0.9" opacity="0.28"/><rect x="493.7" y="126.4" width="4.0" height="1.4" opacity="0.42"/><rect x="497.6" y="126.9" width="1.0" height="0.9" opacity="0.28"/><rect x="498.6" y="126.4" width="1.0" height="1.4" opacity="0.42"/><rect x="499.6" y="126.9" width="1.0" height="0.9" opacity="0.28"/><rect x="501.6" y="126.1" width="1.0" height="1.7" opacity="0.5"/><rect x="502.6" y="126.4" width="1.4" height="1.4" opacity="0.42"/><rect x="460.0" y="128.0" width="1.0" height="0.9" opacity="0.3"/><rect x="461.0" y="128.1" width="1.0" height="1.7" opacity="0.5"/><rect x="462.0" y="128.4" width="4.0" height="1.4" opacity="0.42"/><rect x="465.9" y="128.9" width="2.0" height="0.9" opacity="0.28"/><rect x="467.9" y="128.4" width="1.0" height="1.4" opacity="0.42"/><rect x="468.9" y="128.0" width="1.0" height="0.9" opacity="0.3"/><rect x="469.9" y="128.9" width="1.0" height="0.9" opacity="0.28"/><rect x="470.9" y="128.0" width="1.0" height="0.9" opacity="0.3"/><rect x="471.9" y="128.1" width="2.0" height="1.7" opacity="0.5"/><rect x="473.9" y="128.0" width="1.0" height="0.9" opacity="0.3"/><rect x="474.9" y="128.9" width="1.0" height="0.9" opacity="0.28"/><rect x="475.8" y="128.0" width="1.0" height="0.9" opacity="0.3"/><rect x="476.8" y="128.1" width="1.0" height="1.7" opacity="0.5"/><rect x="477.8" y="128.4" width="1.0" height="1.4" opacity="0.42"/><rect x="478.8" y="128.9" width="1.0" height="0.9" opacity="0.28"/><rect x="479.8" y="128.4" width="4.0" height="1.4" opacity="0.42"/><rect x="483.8" y="128.9" width="1.0" height="0.9" opacity="0.28"/><rect x="484.8" y="128.4" width="2.0" height="1.4" opacity="0.42"/><rect x="487.7" y="128.4" width="2.0" height="1.4" opacity="0.42"/><rect x="490.7" y="128.1" width="1.0" height="1.7" opacity="0.5"/><rect x="491.7" y="128.4" width="1.0" height="1.4" opacity="0.42"/><rect x="492.7" y="128.9" width="1.0" height="0.9" opacity="0.28"/><rect x="493.7" y="128.4" width="1.0" height="1.4" opacity="0.42"/><rect x="494.6" y="128.9" width="1.0" height="0.9" opacity="0.28"/><rect x="495.6" y="128.4" width="2.0" height="1.4" opacity="0.42"/><rect x="498.6" y="128.1" width="1.0" height="1.7" opacity="0.5"/><rect x="499.6" y="128.4" width="1.0" height="1.4" opacity="0.42"/><rect x="500.6" y="128.9" width="1.0" height="0.9" opacity="0.28"/><rect x="501.6" y="128.4" width="2.4" height="1.4" opacity="0.42"/><rect x="460.0" y="130.0" width="1.0" height="0.9" opacity="0.3"/><rect x="461.0" y="130.1" width="1.0" height="1.7" opacity="0.5"/><rect x="462.0" y="130.9" width="1.0" height="0.9" opacity="0.28"/><rect x="463.0" y="130.4" width="6.9" height="1.4" opacity="0.42"/><rect x="469.9" y="130.0" width="1.0" height="0.9" opacity="0.3"/><rect x="470.9" y="130.9" width="1.0" height="0.9" opacity="0.28"/><rect x="471.9" y="130.0" width="1.0" height="0.9" opacity="0.3"/><rect x="472.9" y="130.1" width="2.0" height="1.7" opacity="0.5"/><rect x="474.9" y="130.0" width="1.0" height="0.9" opacity="0.3"/><rect x="475.8" y="130.9" width="1.0" height="0.9" opacity="0.28"/><rect x="476.8" y="130.0" width="1.0" height="0.9" opacity="0.3"/><rect x="477.8" y="130.1" width="1.0" height="1.7" opacity="0.5"/><rect x="478.8" y="130.4" width="1.0" height="1.4" opacity="0.42"/><rect x="479.8" y="130.9" width="1.0" height="0.9" opacity="0.28"/><rect x="480.8" y="130.4" width="4.0" height="1.4" opacity="0.42"/><rect x="484.8" y="130.9" width="1.0" height="0.9" opacity="0.28"/><rect x="485.7" y="130.4" width="2.0" height="1.4" opacity="0.42"/><rect x="488.7" y="130.4" width="2.0" height="1.4" opacity="0.42"/><rect x="491.7" y="130.1" width="1.0" height="1.7" opacity="0.5"/><rect x="492.7" y="130.4" width="1.0" height="1.4" opacity="0.42"/><rect x="493.7" y="130.9" width="1.0" height="0.9" opacity="0.28"/><rect x="494.6" y="130.4" width="5.9" height="1.4" opacity="0.42"/><rect x="500.6" y="130.0" width="1.0" height="0.9" opacity="0.3"/><rect x="460.0" y="132.0" width="1.0" height="0.9" opacity="0.3"/><rect x="461.0" y="132.1" width="1.0" height="1.7" opacity="0.5"/><rect x="462.0" y="132.9" width="1.0" height="0.9" opacity="0.28"/><rect x="463.0" y="132.4" width="1.0" height="1.4" opacity="0.42"/><rect x="464.0" y="132.0" width="1.0" height="0.9" opacity="0.3"/><rect x="464.9" y="132.9" width="1.0" height="0.9" opacity="0.28"/><rect x="465.9" y="132.0" width="1.0" height="0.9" opacity="0.3"/><rect x="466.9" y="132.1" width="2.0" height="1.7" opacity="0.5"/><rect x="468.9" y="132.0" width="1.0" height="0.9" opacity="0.3"/><rect x="469.9" y="132.9" width="1.0" height="0.9" opacity="0.28"/><rect x="470.9" y="132.0" width="1.0" height="0.9" opacity="0.3"/><rect x="471.9" y="132.1" width="1.0" height="1.7" opacity="0.5"/><rect x="472.9" y="132.4" width="1.0" height="1.4" opacity="0.42"/><rect x="473.9" y="132.9" width="1.0" height="0.9" opacity="0.28"/><rect x="474.9" y="132.4" width="4.0" height="1.4" opacity="0.42"/><rect x="478.8" y="132.9" width="1.0" height="0.9" opacity="0.28"/><rect x="479.8" y="132.4" width="2.0" height="1.4" opacity="0.42"/><rect x="482.8" y="132.4" width="2.0" height="1.4" opacity="0.42"/><rect x="485.7" y="132.1" width="1.0" height="1.7" opacity="0.5"/><rect x="486.7" y="132.4" width="3.0" height="1.4" opacity="0.42"/><rect x="489.7" y="132.9" width="1.0" height="0.9" opacity="0.28"/><rect x="490.7" y="132.4" width="3.0" height="1.4" opacity="0.42"/><rect x="493.7" y="132.0" width="1.0" height="0.9" opacity="0.3"/><rect x="460.0" y="134.0" width="1.0" height="0.9" opacity="0.3"/><rect x="461.0" y="134.1" width="1.0" height="1.7" opacity="0.5"/><rect x="462.0" y="134.4" width="4.9" height="1.4" opacity="0.42"/><rect x="466.9" y="134.0" width="1.0" height="0.9" opacity="0.3"/><rect x="467.9" y="134.9" width="1.0" height="0.9" opacity="0.28"/><rect x="468.9" y="134.0" width="1.0" height="0.9" opacity="0.3"/><rect x="469.9" y="134.1" width="2.0" height="1.7" opacity="0.5"/><rect x="471.9" y="134.0" width="1.0" height="0.9" opacity="0.3"/><rect x="472.9" y="134.9" width="1.0" height="0.9" opacity="0.28"/><rect x="473.9" y="134.0" width="1.0" height="0.9" opacity="0.3"/><rect x="474.9" y="134.1" width="1.0" height="1.7" opacity="0.5"/><rect x="475.8" y="134.4" width="1.0" height="1.4" opacity="0.42"/><rect x="476.8" y="134.9" width="1.0" height="0.9" opacity="0.28"/><rect x="477.8" y="134.4" width="4.0" height="1.4" opacity="0.42"/><rect x="481.8" y="134.9" width="1.0" height="0.9" opacity="0.28"/><rect x="482.8" y="134.4" width="2.0" height="1.4" opacity="0.42"/><rect x="485.7" y="134.4" width="2.0" height="1.4" opacity="0.42"/><rect x="488.7" y="134.1" width="1.0" height="1.7" opacity="0.5"/><rect x="489.7" y="134.4" width="8.9" height="1.4" opacity="0.42"/><rect x="498.6" y="134.0" width="1.0" height="0.9" opacity="0.3"/></g></svg>
<div style="left:504px;top:92px;width:1px;height:610px;background:#171717;"></div>
<div style="left:505px;top:92px;width:13px;height:1px;background:#171717;"></div>
<div style="left:505px;top:102px;width:13px;height:2px;background:#a3a3a3;"></div>
<div style="left:505px;top:114px;width:4.2px;height:225px;background:#2a7439;"></div>
<div style="left:279px;top:649px;width:215px;height:28px;background:#0078d4;border-radius:3px;box-shadow:0 2px 6px rgba(0,0,0,.35);"></div>
<div style="left:279.6px;top:649.6px;width:38.2px;height:26.8px;background:#1f72b3;border-radius:3px;"></div>
<span class="t" style="left:286.5px;top:653.8px;line-height:20px;font-size:11.5px;color:#ffffff;letter-spacing:-0.216px;-webkit-text-stroke:0.45px #fff;">Keep</span>
<span class="t" style="left:323px;top:653.8px;line-height:20px;font-size:11.5px;color:#ffffff;letter-spacing:0.252px;-webkit-text-stroke:0.45px #fff;">Undo</span>
<svg style="left:363.2px;top:655.8px;" width="13" height="14" viewBox="0 0 13 14"><path d="M1.6 0.7 H8.4 L12.2 4.5 V12 A1.3 1.3 0 0 1 10.9 13.3 H1.9 A1.3 1.3 0 0 1 0.6 12 V1.7 A1 1 0 0 1 1.6 0.7 Z" fill="none" stroke="#fff" stroke-width="1.2" stroke-linejoin="round"/><path d="M6.4 3.4 V8.2 M4 5.8 H8.8 M4 10.4 H8.8" stroke="#fff" stroke-width="1.2"/></svg>
<div style="left:387px;top:654.5px;width:1px;height:17px;background:rgba(255,255,255,.45);"></div>
<span class="t" style="left:401.7px;top:653.8px;line-height:20px;font-size:11.5px;color:#ffffff;letter-spacing:-0.080px;-webkit-text-stroke:0.45px #fff;">1 of 1</span>
<svg style="left:448px;top:657px;" width="11" height="13" viewBox="0 0 11 13"><path d="M5.5 12.5 V1 M0.6 5.9 L5.5 1 L10.4 5.9" fill="none" stroke="#fff" stroke-width="1.3"/></svg>
<svg style="left:474px;top:657px;" width="11" height="13" viewBox="0 0 11 13"><path d="M5.5 0.5 V12 M0.6 7.1 L5.5 12 L10.4 7.1" fill="none" stroke="#fff" stroke-width="1.3"/></svg>
<div style="left:63px;top:717.7px;width:2px;height:2px;background:#cccccc;border-radius:1px;"></div>
<div style="left:68px;top:717.7px;width:2px;height:2px;background:#cccccc;border-radius:1px;"></div>
<div style="left:73px;top:717.7px;width:2px;height:2px;background:#cccccc;border-radius:1px;"></div>
<div style="left:87px;top:708px;width:178px;height:23.5px;background:#2a2a2a;border-radius:2px;"></div>
<span class="t" style="left:94.5px;top:711.5999999999999px;line-height:20px;font-size:12.5px;color:#8c8c8c;letter-spacing:-0.297px;">Filter</span>
<div style="left:269px;top:708px;width:93.5px;height:23.5px;background:#2a2a2a;border-radius:2px;overflow:hidden;"></div>
<span class="t" style="left:275px;top:710.8px;line-height:20px;font-size:12.5px;color:#cccccc;letter-spacing:0.066px;">Salesforce (</span>
<svg style="left:345.5px;top:717.5px;" width="10" height="6" viewBox="0 0 10 6"><path d="M0.5 0.6 L4.7 4.8 L8.9 0.6" fill="none" stroke="#cccccc" stroke-width="1.2"/></svg>
<svg style="left:370.5px;top:714.5px;" width="16" height="12" viewBox="0 0 16 12"><path d="M0.3 0.8 H14.6 M0.3 4.2 H14.6 M0.3 7.6 H8.4 M0.3 11 H8.4" stroke="#cccccc" stroke-width="1.2"/><path d="M10.2 7.2 L14.8 11.6 M14.8 7.2 L10.2 11.6" stroke="#cccccc" stroke-width="1.2"/></svg>
<svg style="left:398px;top:713px;" width="13" height="14" viewBox="0 0 13 14"><rect x="0.6" y="6.2" width="11.4" height="7.2" rx="1" fill="none" stroke="#cccccc" stroke-width="1.2"/><path d="M3 6.2 V3.8 A3.2 3.2 0 0 1 9.2 2.8" fill="none" stroke="#cccccc" stroke-width="1.2"/></svg>
<div style="left:424.0px;top:719px;width:2px;height:2px;background:#cccccc;border-radius:1px;"></div>
<div style="left:429.3px;top:719px;width:2px;height:2px;background:#cccccc;border-radius:1px;"></div>
<div style="left:434.6px;top:719px;width:2px;height:2px;background:#cccccc;border-radius:1px;"></div>
<div style="left:450px;top:711.5px;width:1px;height:15px;background:#5a5a5a;"></div>
<svg style="left:462.5px;top:713.5px;" width="13" height="12" viewBox="0 0 13 12"><path d="M0.6 4 V0.6 H4.2 M8.8 0.6 H12.4 V4 M12.4 8 V11.4 H8.8 M4.2 11.4 H0.6 V8" fill="none" stroke="#cccccc" stroke-width="1.2"/></svg>
<svg style="left:490.5px;top:715px;" width="9.5" height="9.5" viewBox="0 0 9.5 9.5"><path d="M0.4 0.4 L9.1 9.1 M9.1 0.4 L0.4 9.1" stroke="#cccccc" stroke-width="1.2"/></svg>
<div style="left:48px;top:736px;width:470px;height:42px;background:#181818;overflow:hidden;"></div>
<span class="m" style="left:68px;top:739.8px;line-height:19px;font-size:13.5px;color:#cccccc;letter-spacing:-0.402px;">method cannot be referenced from a non static context:</span>
<span class="m" style="left:68px;top:758.8px;line-height:19px;font-size:13.5px;color:#cccccc;letter-spacing:-0.401px;">Date Date.newInstance(Integer, Integer, Integer) (9:21)</span>
<div style="left:123px;top:736px;width:2px;height:1px;background:#8a8a8a;"></div>
<div style="left:130.5px;top:736px;width:2px;height:1px;background:#8a8a8a;"></div>
<div style="left:383px;top:736px;width:2.5px;height:1px;background:#8a8a8a;"></div>
<div style="left:504px;top:736px;width:1px;height:42px;background:#141414;"></div>
<div style="left:505px;top:769px;width:13px;height:2px;background:#a3a3a3;"></div>
<div style="left:183.5px;top:680px;width:232px;height:24.5px;background:#202020;border:1px solid #454545;border-radius:4px;box-shadow:0 2px 8px rgba(0,0,0,.4);"></div>
<span class="t" style="left:192px;top:683.3px;line-height:20px;font-size:11.5px;color:#cccccc;letter-spacing:0.095px;">Keep Chat Edits in this File (Ctrl+Shift+Y)</span>
<svg style="left:292px;top:676px;" width="14" height="5" viewBox="0 0 14 5"><path d="M0.5 5 L7 0.7 L13.5 5" fill="#202020" stroke="#454545" stroke-width="1"/></svg>
<svg style="left:286px;top:674px;" width="20" height="26" viewBox="0 0 20 26"><path d="M5.2 2.4 C5.2 0.5 8.4 0.5 8.4 2.4 V9.6 C8.6 7.9 11.6 8 11.6 9.8 V10.8 C11.9 9.4 14.9 9.6 14.9 11.4 V12.4 C15.3 11.2 18.2 11.4 18.2 13.4 V18.4 L16.6 24.4 H5.8 L0.9 14.2 C0.2 12.6 2 11.2 3.2 12.6 L5.2 15.2 Z" fill="#ffffff" stroke="#0a0a1e" stroke-width="1.1" stroke-linejoin="round"/>
<path d="M8.4 9.6 V14 M11.6 10.8 V14 M14.9 12.2 V14.4" stroke="#0a0a1e" stroke-width="0.9"/></svg>
<span class="t" style="left:539px;top:42.8px;line-height:20px;font-size:10.5px;color:#cccccc;letter-spacing:-0.279px;">CHAT</span>
<div style="left:537px;top:63px;width:31px;height:1px;background:#0078d4;"></div>
<svg style="left:897px;top:46px;" width="13.5" height="13.5" viewBox="0 0 13.5 13.5"><path d="M6.7 0 V13.4 M0 6.7 H13.4" stroke="#cccccc" stroke-width="1.2"/></svg>
<svg style="left:923px;top:46px;" width="15" height="14" viewBox="0 0 15 14"><path d="M2.2 4.4 A6 6 0 1 1 1.8 9" fill="none" stroke="#cccccc" stroke-width="1.2"/><path d="M0.9 1.2 V4.9 H4.6" fill="none" stroke="#cccccc" stroke-width="1.2"/><path d="M7.6 3.4 V7.4 L10.2 9.6" fill="none" stroke="#cccccc" stroke-width="1.2"/></svg>
<svg style="left:948px;top:45px;" width="16" height="16" viewBox="0 0 16 16"><path d="M6.67 2.66 L6.81 0.49 L9.19 0.49 L9.33 2.66 L10.84 3.29 L12.47 1.85 L14.15 3.53 L12.71 5.16 L13.34 6.67 L15.51 6.81 L15.51 9.19 L13.34 9.33 L12.71 10.84 L14.15 12.47 L12.47 14.15 L10.84 12.71 L9.33 13.34 L9.19 15.51 L6.81 15.51 L6.67 13.34 L5.16 12.71 L3.53 14.15 L1.85 12.47 L3.29 10.84 L2.66 9.33 L0.49 9.19 L0.49 6.81 L2.66 6.67 L3.29 5.16 L1.85 3.53 L3.53 1.85 L5.16 3.29 Z" fill="none" stroke="#cccccc" stroke-width="1.2" stroke-linejoin="round"/><circle cx="8" cy="8" r="2.1" fill="none" stroke="#cccccc" stroke-width="1.2"/></svg>
<div style="left:976.0px;top:52px;width:2px;height:2px;background:#cccccc;border-radius:1px;"></div>
<div style="left:981.2px;top:52px;width:2px;height:2px;background:#cccccc;border-radius:1px;"></div>
<div style="left:986.4px;top:52px;width:2px;height:2px;background:#cccccc;border-radius:1px;"></div>
<div style="left:1001px;top:45px;width:1px;height:15.5px;background:#5a5a5a;"></div>
<svg style="left:1015px;top:47px;" width="13" height="12" viewBox="0 0 13 12"><path d="M0.6 4 V0.6 H4.2 M8.8 0.6 H12.4 V4 M12.4 8 V11.4 H8.8 M4.2 11.4 H0.6 V8" fill="none" stroke="#cccccc" stroke-width="1.2"/></svg>
<svg style="left:1042.5px;top:48.5px;" width="9.5" height="9.5" viewBox="0 0 9.5 9.5"><path d="M0.4 0.4 L9.1 9.1 M9.1 0.4 L0.4 9.1" stroke="#cccccc" stroke-width="1.2"/></svg>
<div style="left:519px;top:69px;width:550px;height:4px;background:linear-gradient(to bottom, rgba(0,0,0,.35), rgba(0,0,0,0));"></div>
<div style="left:553px;top:71px;width:502px;height:1px;background:repeating-linear-gradient(to right,#4d4d4d 0,#4d4d4d 3px,transparent 3px,transparent 5px);"></div>
<svg style="left:537.5px;top:69px;" width="10" height="10" viewBox="0 0 10 10"><path d="M0.6 0 V8.6 L4.6 5.2 L8.6 8.6 V0" fill="none" stroke="#505050" stroke-width="1.1"/></svg>
<div style="left:686px;top:87px;width:368px;height:36px;background:#1d2835;border-radius:8px;"></div>
<span class="t" style="left:699px;top:96.3px;line-height:20px;font-size:12.5px;color:#d6d6d6;letter-spacing:0.125px;">please generate 20 test data, and insert into Contact.csv file.</span>
<div style="left:967px;top:128px;width:87px;height:20px;border:1px solid #3c3c3c;border-radius:4px;"></div>
<svg style="left:975px;top:131.3px;" width="11" height="10" viewBox="0 0 11 10"><rect x="0" y="0" width="11" height="10" rx="0.8" fill="#8bc34a"/><g fill="#5d9427"><rect x="1.8" y="2.2" width="3.2" height="1.8"/><rect x="6" y="2.2" width="3.2" height="1.8"/><rect x="1.8" y="5.6" width="3.2" height="1.8"/><rect x="6" y="5.6" width="3.2" height="1.8"/></g></svg>
<span class="t" style="left:992.7px;top:128.10000000000002px;line-height:20px;font-size:11.0px;color:#cccccc;letter-spacing:-0.288px;">Contact.csv</span>
<svg style="left:543px;top:178.5px;" width="6" height="9" viewBox="0 0 6 9"><path d="M0.7 0.6 L4.8 4.4 L0.7 8.2" fill="none" stroke="#9d9d9d" stroke-width="1.1"/></svg>
<span class="t" style="left:558.3px;top:172.60000000000002px;line-height:20px;font-size:12px;color:#9d9d9d;letter-spacing:-0.257px;">Used 2 references</span>
<div style="left:535px;top:201px;width:519px;height:461.5px;background:#1f1f1f;border:1px solid #0078d4;border-radius:4px;"></div>
<span class="m" style="left:543.8px;top:213.10000000000002px;line-height:20px;font-size:13.5px;color:#d4d4d4;letter-spacing:-0.412px;">&quot;Name&quot;,&quot;Age&quot;,&quot;School&quot;</span>
<span class="m" style="left:543.8px;top:233.10000000000002px;line-height:20px;font-size:13.5px;color:#d4d4d4;letter-spacing:-0.411px;">&quot;Jack&quot;,&quot;21&quot;,&quot;ZheJiang University&quot;</span>
<span class="m" style="left:543.8px;top:253.10000000000002px;line-height:20px;font-size:13.5px;color:#d4d4d4;letter-spacing:-0.412px;">&quot;Emily&quot;,&quot;22&quot;,&quot;Stanford University&quot;</span>
<span class="m" style="left:543.8px;top:273.1px;line-height:20px;font-size:13.5px;color:#d4d4d4;letter-spacing:-0.411px;">&quot;Michael&quot;,&quot;21&quot;,&quot;Harvard University&quot;</span>
<span class="m" style="left:543.8px;top:293.1px;line-height:20px;font-size:13.5px;color:#d4d4d4;letter-spacing:-0.412px;">&quot;Sarah&quot;,&quot;23&quot;,&quot;MIT&quot;</span>
<span class="m" style="left:543.8px;top:313.1px;line-height:20px;font-size:13.5px;color:#d4d4d4;letter-spacing:-0.412px;">&quot;David&quot;,&quot;20&quot;,&quot;Oxford University&quot;</span>
<span class="m" style="left:543.8px;top:333.1px;line-height:20px;font-size:13.5px;color:#d4d4d4;letter-spacing:-0.411px;">&quot;Jessica&quot;,&quot;22&quot;,&quot;Cambridge University&quot;</span>
<span class="m" style="left:543.8px;top:353.1px;line-height:20px;font-size:13.5px;color:#d4d4d4;letter-spacing:-0.412px;">&quot;Daniel&quot;,&quot;24&quot;,&quot;Yale University&quot;</span>
<span class="m" style="left:543.8px;top:373.1px;line-height:20px;font-size:13.5px;color:#d4d4d4;letter-spacing:-0.411px;">&quot;Laura&quot;,&quot;21&quot;,&quot;Princeton University&quot;</span>
<span class="m" style="left:543.8px;top:393.1px;line-height:20px;font-size:13.5px;color:#d4d4d4;letter-spacing:-0.412px;">&quot;James&quot;,&quot;23&quot;,&quot;Columbia University&quot;</span>
<span class="m" style="left:543.8px;top:413.1px;line-height:20px;font-size:13.5px;color:#d4d4d4;letter-spacing:-0.411px;">&quot;Olivia&quot;,&quot;22&quot;,&quot;University of Tokyo&quot;</span>
<span class="m" style="left:543.8px;top:433.1px;line-height:20px;font-size:13.5px;color:#d4d4d4;letter-spacing:-0.412px;">&quot;Ethan&quot;,&quot;20&quot;,&quot;University of Toronto&quot;</span>
<span class="m" style="left:543.8px;top:453.1px;line-height:20px;font-size:13.5px;color:#d4d4d4;letter-spacing:-0.412px;">&quot;Sophia&quot;,&quot;21&quot;,&quot;National University of Singapore&quot;</span>
<span class="m" style="left:543.8px;top:473.1px;line-height:20px;font-size:13.5px;color:#d4d4d4;letter-spacing:-0.411px;">&quot;Benjamin&quot;,&quot;23&quot;,&quot;University of Melbourne&quot;</span>
<span class="m" style="left:543.8px;top:493.1px;line-height:20px;font-size:13.5px;color:#d4d4d4;letter-spacing:-0.412px;">&quot;Emma&quot;,&quot;22&quot;,&quot;University of Sydney&quot;</span>
<span class="m" style="left:543.8px;top:513.0999999999999px;line-height:20px;font-size:13.5px;color:#d4d4d4;letter-spacing:-0.412px;">&quot;Matthew&quot;,&quot;24&quot;,&quot;University of Hong Kong&quot;</span>
<span class="m" style="left:543.8px;top:533.0999999999999px;line-height:20px;font-size:13.5px;color:#d4d4d4;letter-spacing:-0.412px;">&quot;Ava&quot;,&quot;21&quot;,&quot;Seoul National University&quot;</span>
<span class="m" style="left:543.8px;top:553.0999999999999px;line-height:20px;font-size:13.5px;color:#d4d4d4;letter-spacing:-0.411px;">&quot;William&quot;,&quot;23&quot;,&quot;University of California, Berkeley&quot;</span>
<span class="m" style="left:543.8px;top:573.0999999999999px;line-height:20px;font-size:13.5px;color:#d4d4d4;letter-spacing:-0.412px;">&quot;Isabella&quot;,&quot;22&quot;,&quot;University of British Columbia&quot;</span>
<span class="m" style="left:543.8px;top:593.0999999999999px;line-height:20px;font-size:13.5px;color:#d4d4d4;letter-spacing:-0.412px;">&quot;Alexander&quot;,&quot;20&quot;,&quot;University of Edinburgh&quot;</span>
<span class="m" style="left:543.8px;top:613.0999999999999px;line-height:20px;font-size:13.5px;color:#d4d4d4;letter-spacing:-0.411px;">&quot;Mia&quot;,&quot;21&quot;,&quot;University of Auckland&quot;</span>
<span class="m" style="left:543.8px;top:633.0999999999999px;line-height:20px;font-size:13.5px;color:#d4d4d4;letter-spacing:-0.412px;">&quot;Joshua&quot;,&quot;23&quot;,&quot;University of Manchester&quot;</span>
<div style="left:812.3px;top:273px;width:1.6px;height:17px;background:#d8d8d8;"></div>
<div style="left:929px;top:208px;width:114px;height:27.5px;background:#1f1f1f;border:1px solid #333333;border-radius:4px;"></div>
<svg style="left:935.5px;top:213.5px;" width="16" height="16" viewBox="0 0 16 16"><path d="M8.6 2.6 H10.4 L14.1 6 V13.5 A1 1 0 0 1 13.1 14.5 H4 A1 1 0 0 1 3 13.5 V9.8" fill="none" stroke="#cccccc" stroke-width="1.2" stroke-linejoin="round"/><path d="M1.8 6.8 C1.4 5.2 2.2 4 3.8 4 H6.4 M5 1.5 L7 4 L5 6" fill="none" stroke="#cccccc" stroke-width="1.2"/><path d="M8 5.6 V9.1 M6.2 7.3 H9.8 M5.8 11.9 H10.5" stroke="#cccccc" stroke-width="1.2"/></svg>
<svg style="left:965px;top:215px;" width="15" height="14" viewBox="0 0 15 14"><rect x="4.5" y="1.1" width="8.9" height="3.7" rx="0.8" fill="none" stroke="#cccccc" stroke-width="1.2"/><rect x="4.5" y="8.9" width="8.9" height="3.9" rx="0.8" fill="none" stroke="#cccccc" stroke-width="1.2"/><path d="M0 5.5 L1.7 7.1 L0 8.7" fill="none" stroke="#cccccc" stroke-width="1.2"/></svg>
<svg style="left:993px;top:214.5px;" width="14" height="15" viewBox="0 0 14 15"><path d="M4.2 5.2 A1 1 0 0 1 5.2 4.2 H9 L12 7.2 V12.3 A1 1 0 0 1 11 13.3 H5.2 A1 1 0 0 1 4.2 12.3 Z" fill="none" stroke="#cccccc" stroke-width="1.2" stroke-linejoin="round"/><path d="M8 1.6 H3 A1.4 1.4 0 0 0 1.6 3 V10.4 C1.6 11.6 2 12.2 2.8 12.6" fill="none" stroke="#cccccc" stroke-width="1.2"/></svg>
<div style="left:1022.0px;top:221px;width:2px;height:2px;background:#cccccc;border-radius:1px;"></div>
<div style="left:1027.2px;top:221px;width:2px;height:2px;background:#cccccc;border-radius:1px;"></div>
<div style="left:1032.4px;top:221px;width:2px;height:2px;background:#cccccc;border-radius:1px;"></div>
<div style="left:1031px;top:630px;width:27px;height:27px;background:#2f2f2f;border:1px solid #3d3d3d;border-radius:14px;"></div>
<svg style="left:1039px;top:640px;" width="12" height="7" viewBox="0 0 12 7"><path d="M0.6 0.6 L5.6 5.6 L10.6 0.6" fill="none" stroke="#cccccc" stroke-width="1.3"/></svg>
<div style="left:535px;top:672px;width:519px;height:92px;background:#313131;border:1px solid #3a3a3a;border-radius:4px;"></div>
<div style="left:542px;top:679px;width:96px;height:20px;border:1px solid #4a4a4a;border-radius:4px;"></div>
<svg style="left:550px;top:683.5px;" width="8" height="12" viewBox="0 0 8 12"><path d="M6.6 3.4 V8.4 A2.6 2.6 0 0 1 1.4 8.4 V2.8 A1.8 1.8 0 0 1 5 2.8 V8.2 A0.9 0.9 0 0 1 3.2 8.2 V3.6" fill="none" stroke="#cccccc" stroke-width="1.1"/></svg>
<span class="t" style="left:565.3px;top:679.0999999999999px;line-height:20px;font-size:10.5px;color:#cccccc;letter-spacing:0.104px;">Add Context...</span>
<div style="left:642px;top:679px;width:107px;height:20px;border:1px solid #4a4a4a;border-radius:4px;"></div>
<svg style="left:650.3px;top:683.7px;" width="11" height="10" viewBox="0 0 11 10"><rect x="0" y="0" width="11" height="10" rx="0.8" fill="#8bc34a"/><g fill="#5d9427"><rect x="1.8" y="2.2" width="3.2" height="1.8"/><rect x="6" y="2.2" width="3.2" height="1.8"/><rect x="1.8" y="5.6" width="3.2" height="1.8"/><rect x="6" y="5.6" width="3.2" height="1.8"/></g></svg>
<span class="t" style="left:667px;top:679.0999999999999px;line-height:20px;font-size:10.5px;color:#cccccc;letter-spacing:0.013px;">Contact.csv</span>
<svg style="left:731.5px;top:684.5px;" width="9.5" height="9.5" viewBox="0 0 9.5 9.5"><path d="M0.4 0.4 L9.1 9.1 M9.1 0.4 L0.4 9.1" stroke="#cccccc" stroke-width="1.2"/></svg>
<span class="t" style="left:542.3px;top:707.8px;line-height:20px;font-size:12.5px;color:#8f8f8f;letter-spacing:0.131px;">Add context (#), extensions (@), commands (/)</span>
<span class="t" style="left:547.7px;top:735.8px;line-height:20px;font-size:10.5px;color:#cccccc;letter-spacing:-0.003px;">Ask</span>
<svg style="left:569.7px;top:743.5px;" width="9" height="6" viewBox="0 0 9 6"><path d="M0.5 0.6 L4.2 4.3 L7.9 0.6" fill="none" stroke="#cccccc" stroke-width="1.1"/></svg>
<span class="t" style="left:593.3px;top:735.8px;line-height:20px;font-size:10.5px;color:#cccccc;letter-spacing:-0.230px;">GPT-4.1</span>
<svg style="left:635.7px;top:743.5px;" width="9" height="6" viewBox="0 0 9 6"><path d="M0.5 0.6 L4.2 4.3 L7.9 0.6" fill="none" stroke="#cccccc" stroke-width="1.1"/></svg>
<svg style="left:1015.5px;top:739.5px;" width="15" height="13" viewBox="0 0 15 13"><path d="M0.8 0.8 L14 6.5 L0.8 12.2 L3.2 6.5 Z M3.2 6.5 H9" fill="none" stroke="#b0b0b0" stroke-width="1.1" stroke-linejoin="round"/></svg>
<svg style="left:1035.3px;top:743.7px;" width="9" height="6" viewBox="0 0 9 6"><path d="M0.5 0.6 L4.2 4.3 L7.9 0.6" fill="none" stroke="#cccccc" stroke-width="1.1"/></svg>
<svg style="left:12px;top:783px;" width="11" height="12" viewBox="0 0 11 12"><path d="M0.8 3.4 L4.8 7.4 L0.8 11.4" fill="none" stroke="#ffffff" stroke-width="1.3"/><path d="M9.9 0.4 L5.9 4.4 L9.9 8.4" fill="none" stroke="#ffffff" stroke-width="1.1"/></svg>
<svg style="left:42.2px;top:782.6px;" width="13" height="13" viewBox="0 0 13 13"><circle cx="6.5" cy="6.5" r="5.8" fill="none" stroke="#cccccc" stroke-width="1.1"/><path d="M4.1 4.1 L8.9 8.9 M8.9 4.1 L4.1 8.9" stroke="#cccccc" stroke-width="1.1"/></svg>
<span class="t" style="left:60.5px;top:780.3px;line-height:20px;font-size:10.5px;color:#cccccc;letter-spacing:-0.852px;">1</span>
<svg style="left:69.8px;top:782.6px;" width="13" height="13" viewBox="0 0 13 13"><path d="M6.5 1.2 L12.2 11.6 H0.8 Z" fill="none" stroke="#cccccc" stroke-width="1.1" stroke-linejoin="round"/><path d="M6.5 4.8 V8.4 M6.5 9.4 V10.6" stroke="#cccccc" stroke-width="1.1"/></svg>
<span class="t" style="left:87px;top:780.3px;line-height:20px;font-size:11.5px;color:#cccccc;letter-spacing:-0.109px;">6</span>
<svg style="left:96.8px;top:782.6px;" width="13" height="13" viewBox="0 0 13 13"><circle cx="6.5" cy="6.5" r="5.8" fill="none" stroke="#cccccc" stroke-width="1.1"/><path d="M6.5 5.8 V9.6 M6.5 3.4 V4.8" stroke="#cccccc" stroke-width="1.2"/></svg>
<span class="t" style="left:113.7px;top:780.3px;line-height:20px;font-size:11.5px;color:#cccccc;letter-spacing:-0.101px;">42</span>
<svg style="left:143px;top:783px;" width="14" height="12" viewBox="0 0 14 12"><rect x="0.6" y="0.6" width="12.4" height="10.8" rx="1" fill="none" stroke="#cccccc" stroke-width="1.2"/><path d="M0.6 3.4 H13" stroke="#cccccc" stroke-width="1.2"/></svg>
<svg style="left:175px;top:783px;" width="9" height="13" viewBox="0 0 9 13"><path d="M2.4 0.3 V3.4 M6.4 0.3 V3.4" stroke="#cccccc" stroke-width="1.2"/><path d="M0.7 3.6 H8.1 V6.4 A3.7 3.7 0 0 1 0.7 6.4 Z" fill="none" stroke="#cccccc" stroke-width="1.2"/><path d="M4.4 10 V12.8" stroke="#cccccc" stroke-width="1.4"/></svg>
<span class="t" style="left:190.5px;top:780.3px;line-height:20px;font-size:11.5px;color:#cccccc;letter-spacing:-0.151px;">Dev</span>
<div style="left:228px;top:785.0px;width:11.5px;height:2px;background:#cccccc;"></div>
<div style="left:228px;top:788.6px;width:11.5px;height:2px;background:#cccccc;"></div>
<div style="left:228px;top:792.2px;width:11.5px;height:2px;background:#cccccc;"></div>
<span class="t" style="left:574.5px;top:780.3px;line-height:20px;font-size:11.5px;color:#cccccc;letter-spacing:-0.027px;">Ln 2, Col 14</span>
<span class="t" style="left:652px;top:780.3px;line-height:20px;font-size:11.5px;color:#cccccc;letter-spacing:-0.217px;">Spaces: 4</span>
<span class="t" style="left:717.5px;top:780.3px;line-height:20px;font-size:11.5px;color:#cccccc;letter-spacing:-0.277px;">UTF-8</span>
<svg style="left:766px;top:783.5px;" width="12" height="12" viewBox="0 0 12 12"><path d="M3.6 0.6 C2.2 0.6 1.9 1.2 1.9 2.4 V3.8 C1.9 4.8 1.5 5.4 0.5 5.5 C1.5 5.6 1.9 6.2 1.9 7.2 V8.6 C1.9 9.8 2.2 10.4 3.6 10.4" fill="none" stroke="#cccccc" stroke-width="1.1"/><path d="M7.8 0.6 C9.2 0.6 9.5 1.2 9.5 2.4 V3.8 C9.5 4.8 9.9 5.4 10.9 5.5 C9.9 5.6 9.5 6.2 9.5 7.2 V8.6 C9.5 9.8 9.2 10.4 7.8 10.4" fill="none" stroke="#cccccc" stroke-width="1.1"/></svg>
<span class="t" style="left:785px;top:780.3px;line-height:20px;font-size:11.5px;color:#cccccc;letter-spacing:-0.065px;">Plain Text</span>
<svg style="left:850px;top:783px;" width="15" height="13" viewBox="0 0 15 13"><rect x="2.4" y="0.8" width="4.4" height="4.6" rx="1.8" fill="none" stroke="#cccccc" stroke-width="1.1"/><rect x="7.8" y="0.8" width="4.4" height="4.6" rx="1.8" fill="none" stroke="#cccccc" stroke-width="1.1"/><path d="M2.2 4.6 C0.4 5.6 0.4 8.6 1.4 9.6 C3.6 12 11 12 13.2 9.6 C14.2 8.6 14.2 5.6 12.4 4.6" fill="none" stroke="#cccccc" stroke-width="1.1"/><path d="M5.4 7 V9 M9.2 7 V9" stroke="#cccccc" stroke-width="1.2"/><path d="M1.2 0.2 L13.6 12" stroke="#181818" stroke-width="2.6"/><path d="M1.2 0.2 L13.6 12" stroke="#cccccc" stroke-width="1.1"/></svg>
<span class="t" style="left:880px;top:780.3px;line-height:20px;font-size:11.5px;color:#cccccc;letter-spacing:0.091px;">Apex PMD</span>
<svg style="left:940px;top:784px;" width="13" height="11" viewBox="0 0 13 11"><path d="M0.6 6.2 L4.2 9.8 L12.4 0.8" fill="none" stroke="#cccccc" stroke-width="1.2"/></svg>
<svg style="left:969px;top:785px;" width="14" height="9" viewBox="0 0 14 9"><path d="M0.5 4.6 L3 7.6 L8.6 0.6 M5 6 L6.4 7.6 L12.6 0.6" fill="none" stroke="#cccccc" stroke-width="1.1"/></svg>
<span class="t" style="left:987px;top:780.3px;line-height:20px;font-size:11.5px;color:#cccccc;letter-spacing:0.116px;">Prettier</span>
<svg style="left:1042px;top:782.5px;" width="13" height="13" viewBox="0 0 13 13"><path d="M7.2 1.1 A4.2 4.2 0 0 0 2.6 5.2 V8.8 L1 10.6 H10.8 L9.6 9 V6.8" fill="none" stroke="#cccccc" stroke-width="1.1" stroke-linejoin="round"/><path d="M4.4 10.8 A1.6 1.6 0 0 0 7.4 10.8 Z" fill="#cccccc"/><circle cx="9.6" cy="3" r="2.7" fill="#cccccc"/></svg>
</div></div>
</body></html>
